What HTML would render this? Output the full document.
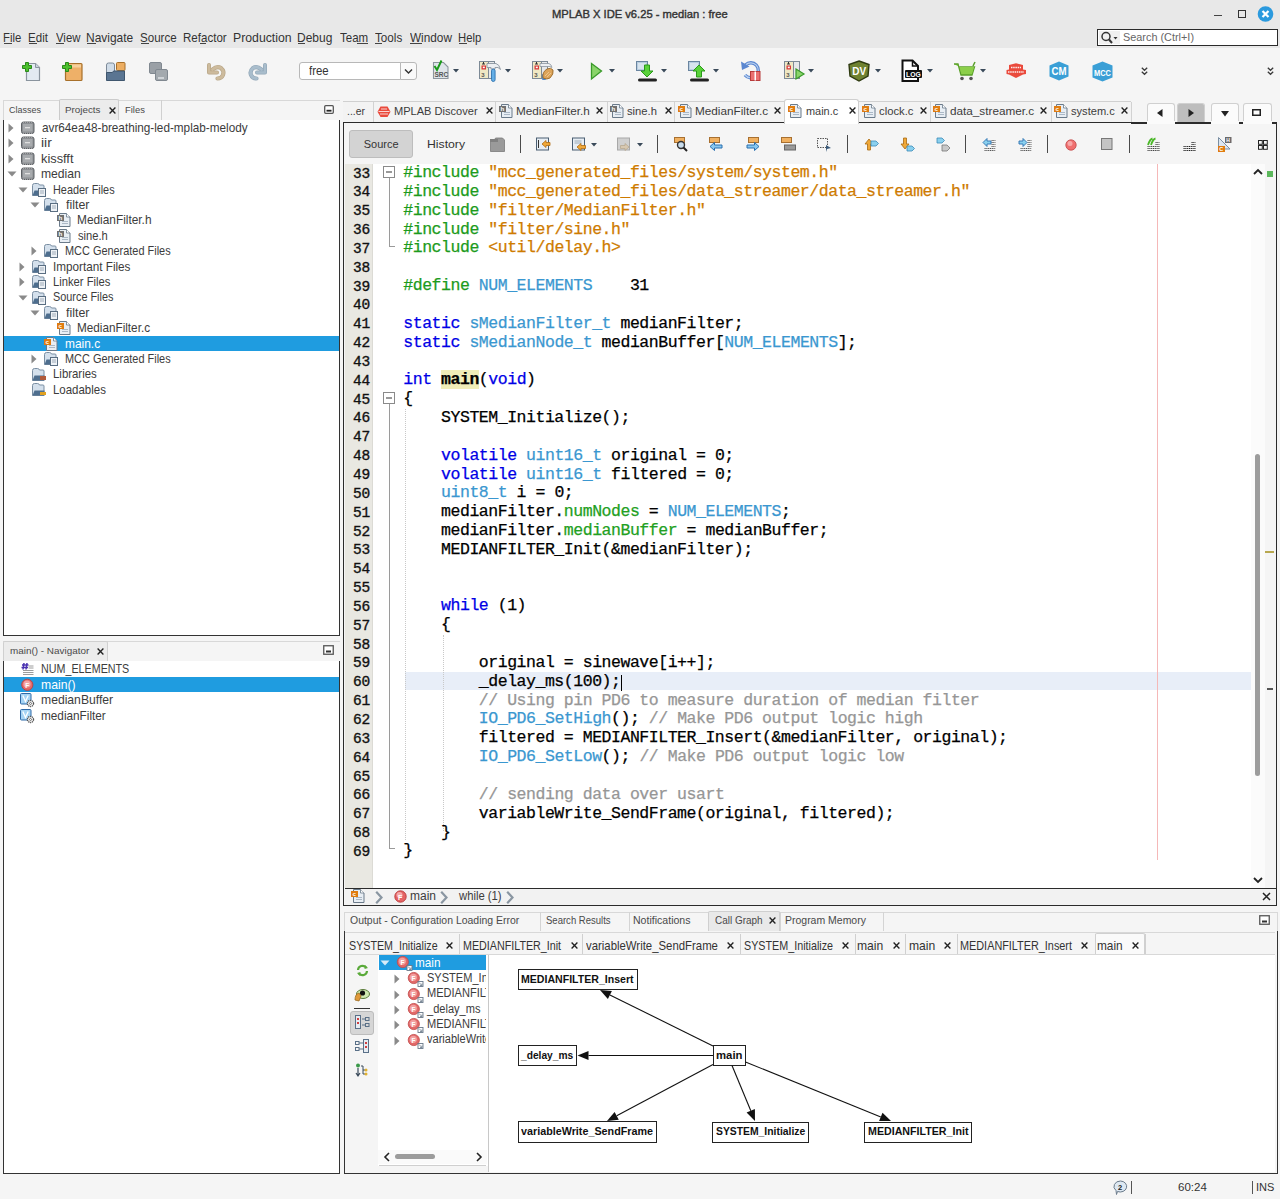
<!DOCTYPE html><html><head><meta charset="utf-8"><style>
*{box-sizing:border-box;margin:0;padding:0}
html,body{width:1280px;height:1199px;overflow:hidden;background:#f5f5f5;font-family:"Liberation Sans",sans-serif;color:#3c3c3c;position:relative}
.a{position:absolute}
.t{position:absolute;white-space:pre;font-size:12px;line-height:14px}
svg{position:absolute;overflow:visible}
.code{position:absolute;left:403.3px;top:164.0px;font-family:"Liberation Mono",monospace;font-size:16.5px;letter-spacing:-0.46px;white-space:pre;color:#000;line-height:18.84px;-webkit-text-stroke:0.25px currentColor}
.lnum{position:absolute;left:345px;top:164.5px;width:25px;-webkit-text-stroke:0.35px #111;text-align:right;font-family:"Liberation Mono",monospace;font-size:14.5px;letter-spacing:-0.2px;color:#111;white-space:pre;line-height:18.84px}
.kw{color:#0000e6}.ty{color:#3a97d0}.pp{color:#1c9b1c}.st{color:#ce7b00}.cm{color:#969696}.fd{color:#22a022}
.tab{position:absolute;font-size:12px;color:#3c3c3c;white-space:pre;line-height:14px}
.x{position:absolute;font-size:11px;color:#222;line-height:12px}
</style></head><body>
<div class="a" style="left:0px;top:0px;width:1280px;height:48px;background:#e8e8e8"></div>
<div class="t" style="left:551.70px;top:8.82px;font-size:11.2px;line-height:11.2px;color:#333;-webkit-text-stroke:0.4px #333;transform:scaleX(0.9989);transform-origin:0 0;">MPLAB X IDE v6.25 - median : free</div>
<div class="a" style="left:1214px;top:14.8px;width:7.5px;height:1.6px;background:#444"></div>
<div class="a" style="left:1238px;top:10px;width:7.6px;height:7.6px;border:1.4px solid #333"></div>
<svg style="left:1257px;top:6px" width="17" height="17"><circle cx="8.5" cy="8" r="7.8" fill="#2b9ade"/><path d="M5.5 5 L11.5 11 M11.5 5 L5.5 11" stroke="#fff" stroke-width="2.2"/></svg>
<div class="t" style="left:3.37px;top:32.36px;font-size:12.1px;line-height:12.1px;color:#333;transform:scaleX(0.9333);transform-origin:0 0;">File</div>
<div class="t" style="left:28.35px;top:32.36px;font-size:12.1px;line-height:12.1px;color:#333;transform:scaleX(0.9550);transform-origin:0 0;">Edit</div>
<div class="t" style="left:55.70px;top:32.36px;font-size:12.1px;line-height:12.1px;color:#333;transform:scaleX(0.9385);transform-origin:0 0;">View</div>
<div class="t" style="left:86.31px;top:32.36px;font-size:12.1px;line-height:12.1px;color:#333;transform:scaleX(0.9894);transform-origin:0 0;">Navigate</div>
<div class="t" style="left:140.04px;top:32.36px;font-size:12.1px;line-height:12.1px;color:#333;transform:scaleX(0.9568);transform-origin:0 0;">Source</div>
<div class="t" style="left:182.64px;top:32.36px;font-size:12.1px;line-height:12.1px;color:#333;transform:scaleX(0.9556);transform-origin:0 0;">Refactor</div>
<div class="t" style="left:232.79px;top:32.36px;font-size:12.1px;line-height:12.1px;color:#333;transform:scaleX(1.0143);transform-origin:0 0;">Production</div>
<div class="t" style="left:296.91px;top:32.36px;font-size:12.1px;line-height:12.1px;color:#333;transform:scaleX(0.9912);transform-origin:0 0;">Debug</div>
<div class="t" style="left:340.20px;top:32.36px;font-size:12.1px;line-height:12.1px;color:#333;transform:scaleX(0.9517);transform-origin:0 0;">Team</div>
<div class="t" style="left:375.00px;top:32.36px;font-size:12.1px;line-height:12.1px;color:#333;transform:scaleX(0.9643);transform-origin:0 0;">Tools</div>
<div class="t" style="left:410.20px;top:32.36px;font-size:12.1px;line-height:12.1px;color:#333;transform:scaleX(0.9744);transform-origin:0 0;">Window</div>
<div class="t" style="left:458.07px;top:32.36px;font-size:12.1px;line-height:12.1px;color:#333;transform:scaleX(0.9333);transform-origin:0 0;">Help</div>
<div class="a" style="left:4.3px;top:43.2px;width:7.8999999999999995px;height:1px;background:#444"></div>
<div class="a" style="left:29.3px;top:43.2px;width:7.699999999999999px;height:1px;background:#444"></div>
<div class="a" style="left:55.7px;top:43.2px;width:8.299999999999997px;height:1px;background:#444"></div>
<div class="a" style="left:87.3px;top:43.2px;width:9.200000000000003px;height:1px;background:#444"></div>
<div class="a" style="left:141px;top:43.2px;width:8px;height:1px;background:#444"></div>
<div class="a" style="left:200.2px;top:43.2px;width:6.0px;height:1px;background:#444"></div>
<div class="a" style="left:297.9px;top:43.2px;width:7.600000000000023px;height:1px;background:#444"></div>
<div class="a" style="left:357.4px;top:43.2px;width:10.400000000000034px;height:1px;background:#444"></div>
<div class="a" style="left:375px;top:43.2px;width:6.800000000000011px;height:1px;background:#444"></div>
<div class="a" style="left:410.2px;top:43.2px;width:11.699999999999989px;height:1px;background:#444"></div>
<div class="a" style="left:459px;top:43.2px;width:7.800000000000011px;height:1px;background:#444"></div>
<div class="a" style="left:1097px;top:29px;width:181px;height:17px;background:#fff;border:1.5px solid #2b2b2b"></div>
<div class="a" style="left:1099px;top:31px;width:21px;height:13px;background:#f0f0f0"></div>
<svg style="left:1100px;top:31px" width="20" height="14"><circle cx="6" cy="5.5" r="4" fill="none" stroke="#333" stroke-width="1.5"/><path d="M9 8.5 L12 12" stroke="#333" stroke-width="2"/><path d="M13.5 6 L17.5 6 L15.5 8.5Z" fill="#333"/></svg>
<div class="t" style="left:1123.40px;top:32.46px;font-size:10.8px;line-height:10.8px;color:#666;transform:scaleX(1.0071);transform-origin:0 0;">Search (Ctrl+I)</div>
<div class="a" style="left:0px;top:48px;width:1280px;height:50px;background:#f5f5f5"></div>
<svg style="left:22px;top:62px" width="20" height="20" viewBox="0 0 20 20"><path d="M4.5 1.5 h9 l4 4 v13 h-13z" fill="#e2e9f1" stroke="#8a949e" stroke-width="1.2"/><path d="M13.5 1.5 v4 h4" fill="#c9d3dd" stroke="#8a949e" stroke-width="1"/><path d="M3.5 0.5 h3 v3 h3 v3 h-3 v3 h-3 v-3 h-3 v-3 h3z" fill="#4cc02c" stroke="#2a8a1a" stroke-width="1"/></svg>
<svg style="left:62px;top:62px" width="22" height="20" viewBox="0 0 22 20"><rect x="3.5" y="1.5" width="16.5" height="17" rx="1" fill="#eeb068" stroke="#a8702a" stroke-width="1.2"/><rect x="4.5" y="2.5" width="14.5" height="3" fill="#f6d09c"/><path d="M3.5 0.5 h3 v3 h3 v3 h-3 v3 h-3 v-3 h-3 v-3 h3z" fill="#4cc02c" stroke="#2a8a1a" stroke-width="1"/></svg>
<svg style="left:105px;top:61px" width="22" height="22" viewBox="0 0 22 22"><path d="M1.5 4 q0-2 2-2 h4 q2 0 2 2 v14 h-8z" fill="#d0dce8" stroke="#7d8a98" stroke-width="1"/><rect x="11.5" y="1.5" width="8.5" height="8" rx="1" fill="#edae62" stroke="#a8702a" stroke-width="1"/><path d="M1.5 19.5 v-8 h6 l1-1.5 h11 v9.5z" fill="#5a7592" stroke="#3f566e" stroke-width="1"/></svg>
<svg style="left:148px;top:61px" width="22" height="22" viewBox="0 0 22 22"><rect x="1.5" y="1.5" width="12" height="11" rx="1.5" fill="#9aa0a6" stroke="#808890" stroke-width="1"/><rect x="7.5" y="8.5" width="12" height="11" rx="1.5" fill="#a3a9ae" stroke="#808890" stroke-width="1"/><rect x="10" y="16" width="6" height="2" fill="#d0d4d8"/></svg>
<svg style="left:207px;top:63px" width="19" height="18" viewBox="0 0 19 18"><path d="M2 2 v7.5 h8" fill="none" stroke="#b8a688" stroke-width="4" stroke-linejoin="round" stroke-linecap="round"/><path d="M5.5 6.5 Q10 2.5 14 5 Q17.5 8 16 12 Q14.5 15.5 10.5 15.5" fill="none" stroke="#b8a688" stroke-width="4.2" stroke-linecap="round"/><path d="M2 2 v7.5 h8" fill="none" stroke="#cdbb9d" stroke-width="2.6" stroke-linejoin="round" stroke-linecap="round"/><path d="M5.5 6.5 Q10 2.5 14 5 Q17.5 8 16 12 Q14.5 15.5 10.5 15.5" fill="none" stroke="#cdbb9d" stroke-width="2.8" stroke-linecap="round"/></svg>
<svg style="left:248px;top:63px" width="19" height="18" viewBox="0 0 19 18"><g transform="translate(19,0) scale(-1,1)"><path d="M2 2 v7.5 h8" fill="none" stroke="#93a8b8" stroke-width="4" stroke-linejoin="round" stroke-linecap="round"/><path d="M5.5 6.5 Q10 2.5 14 5 Q17.5 8 16 12 Q14.5 15.5 10.5 15.5" fill="none" stroke="#93a8b8" stroke-width="4.2" stroke-linecap="round"/><path d="M2 2 v7.5 h8" fill="none" stroke="#a9bdcc" stroke-width="2.6" stroke-linejoin="round" stroke-linecap="round"/><path d="M5.5 6.5 Q10 2.5 14 5 Q17.5 8 16 12 Q14.5 15.5 10.5 15.5" fill="none" stroke="#a9bdcc" stroke-width="2.8" stroke-linecap="round"/></g></svg>
<div class="a" style="left:299px;top:62px;width:102px;height:18px;background:#fff;border:1px solid #b8b8b8;border-radius:3px 0 0 3px"></div>
<div class="a" style="left:400px;top:62px;width:17px;height:18px;border:1px solid #b8b8b8;background:#fafafa;border-radius:0 3px 3px 0"></div>
<svg style="left:404px;top:69px" width="9" height="5" viewBox="0 0 9 5"><path d="M1 0.5 L4.5 4 L8 0.5" fill="none" stroke="#333" stroke-width="1.4"/></svg>
<div class="t" style="left:308.80px;top:65.04px;font-size:12px;line-height:12px;color:#333;transform:scaleX(0.9476);transform-origin:0 0;">free</div>
<svg style="left:432px;top:60px" width="18" height="20" viewBox="0 0 18 20"><path d="M1.5 2.5 h10 l4.5 4.5 v11.5 h-14.5z" fill="#dfe5ea" stroke="#8d969e" stroke-width="1.1"/><text x="2.5" y="16.5" font-family="Liberation Sans" font-weight="bold" font-size="6.5" fill="#555">SRC</text><path d="M2.5 6 L5 10 L9.5 0.5" fill="none" stroke="#1a9a1a" stroke-width="2"/></svg>
<svg style="left:453px;top:69px" width="6" height="4" viewBox="0 0 6 4"><path d="M0 0 L6 0 L3 3.5Z" fill="#3a4a5a"/></svg>
<svg style="left:479px;top:61px" width="22" height="22" viewBox="0 0 22 22"><rect x="0.5" y="0.5" width="9" height="17" fill="#efe8c4" stroke="#7d8a96" stroke-width="1"/><path d="M4.5 1 v2 M3 3 h3" stroke="#333" stroke-width="1"/><rect x="2.5" y="4.5" width="4.5" height="4" fill="#d83a3a"/><rect x="3.8" y="5.6" width="2" height="1.6" fill="#fff"/><text x="2.3" y="15.5" font-family="Liberation Sans" font-weight="bold" font-size="6" fill="#555">3</text><rect x="9.5" y="0.5" width="6" height="17" fill="#e6e8ea" stroke="#7d8a96" stroke-width="1"/><path d="M8 2.5 h9 q3.5 1 4.5 6 l-2.5-2 h-3 v1.5 h-4 v-1.5 h-4z" fill="#eceff2" stroke="#8a949e" stroke-width="0.9"/><rect x="12.5" y="8" width="3.6" height="12.5" rx="1.8" fill="#64aee6" stroke="#2f74b0" stroke-width="0.9"/></svg>
<svg style="left:505px;top:69px" width="6" height="4" viewBox="0 0 6 4"><path d="M0 0 L6 0 L3 3.5Z" fill="#3a4a5a"/></svg>
<svg style="left:532px;top:61px" width="22" height="22" viewBox="0 0 22 22"><rect x="0.5" y="0.5" width="9" height="17" fill="#efe8c4" stroke="#7d8a96" stroke-width="1"/><path d="M4.5 1 v2 M3 3 h3" stroke="#333" stroke-width="1"/><rect x="2.5" y="4.5" width="4.5" height="4" fill="#d83a3a"/><rect x="3.8" y="5.6" width="2" height="1.6" fill="#fff"/><text x="2.3" y="15.5" font-family="Liberation Sans" font-weight="bold" font-size="6" fill="#555">3</text><rect x="9.5" y="0.5" width="6" height="17" fill="#e6e8ea" stroke="#7d8a96" stroke-width="1"/><path d="M8 2.5 h9 q2.5 1 3 4 l-2-1 h-10z" fill="#eceff2" stroke="#8a949e" stroke-width="0.8"/><rect x="10" y="13" width="4" height="6" rx="1" fill="#4a8ad0"/><path d="M11 17 q-1-6 4-9 q4-2 6 1 q1 4-3 8 q-3 2-7 0z" fill="#dca45a" stroke="#9a6a2a" stroke-width="0.9"/><path d="M13 15 l4-4 M15 16 l4-4" stroke="#f2d09a" stroke-width="0.8"/></svg>
<svg style="left:557px;top:69px" width="6" height="4" viewBox="0 0 6 4"><path d="M0 0 L6 0 L3 3.5Z" fill="#3a4a5a"/></svg>
<svg style="left:590px;top:62px" width="13" height="19" viewBox="0 0 13 19"><path d="M1.5 1.5 L11.5 9 L1.5 17z" fill="#8ad46a" stroke="#3a9a2a" stroke-width="1.3"/></svg>
<svg style="left:609px;top:69px" width="6" height="4" viewBox="0 0 6 4"><path d="M0 0 L6 0 L3 3.5Z" fill="#3a4a5a"/></svg>
<svg style="left:636px;top:61px" width="22" height="21" viewBox="0 0 22 21"><rect x="0.5" y="0.5" width="11" height="9" fill="#b8cde0" stroke="#6a85a0" stroke-width="1"/><rect x="2" y="2" width="8" height="6" fill="#d8e4ee"/><path d="M8.5 4 h5 v6 h3.5 l-6 6 l-6-6 h3.5z" fill="#5ad23a" stroke="#2a9a1a" stroke-width="1"/><rect x="2" y="17.5" width="19" height="3" rx="1.5" fill="#222"/></svg>
<svg style="left:661px;top:69px" width="6" height="4" viewBox="0 0 6 4"><path d="M0 0 L6 0 L3 3.5Z" fill="#3a4a5a"/></svg>
<svg style="left:688px;top:61px" width="22" height="21" viewBox="0 0 22 21"><rect x="0.5" y="0.5" width="11" height="9" fill="#b8cde0" stroke="#6a85a0" stroke-width="1"/><rect x="2" y="2" width="8" height="6" fill="#d8e4ee"/><path d="M11 4 l6 6 h-3.5 v6 h-5 v-6 h-3.5z" fill="#5ad23a" stroke="#2a9a1a" stroke-width="1"/><rect x="2" y="17.5" width="19" height="3" rx="1.5" fill="#222"/></svg>
<svg style="left:713px;top:69px" width="6" height="4" viewBox="0 0 6 4"><path d="M0 0 L6 0 L3 3.5Z" fill="#3a4a5a"/></svg>
<svg style="left:740px;top:60px" width="22" height="22" viewBox="0 0 22 22"><path d="M5.5 5 A7.5 7.5 0 1 1 5 15" fill="none" stroke="#5a86d0" stroke-width="3.4"/><path d="M5.5 5 A7.5 7.5 0 1 1 5 15" fill="none" stroke="#b8d0f0" stroke-width="1.2"/><path d="M1 1.5 L2 10 L9.5 6.5z" fill="#5a86d0"/><rect x="10.5" y="11.5" width="9.5" height="9" fill="#ea7070" stroke="#b83a3a" stroke-width="1"/><rect x="14.5" y="11.5" width="1.5" height="9" fill="#fff"/></svg>
<svg style="left:784px;top:61px" width="22" height="21" viewBox="0 0 22 21"><rect x="0.5" y="0.5" width="9" height="17" fill="#efe8c4" stroke="#7d8a96" stroke-width="1"/><path d="M4.5 1 v2 M3 3 h3" stroke="#333" stroke-width="1"/><rect x="2.5" y="4.5" width="4.5" height="4" fill="#d83a3a"/><rect x="3.8" y="5.6" width="2" height="1.6" fill="#fff"/><text x="2.3" y="15.5" font-family="Liberation Sans" font-weight="bold" font-size="6" fill="#555">3</text><rect x="9.5" y="0.5" width="6" height="17" fill="#e6e8ea" stroke="#7d8a96" stroke-width="1"/><path d="M12 8 L20 13 L12 18z" fill="#8ad46a" stroke="#3a9a2a" stroke-width="1.2"/></svg>
<svg style="left:808px;top:69px" width="6" height="4" viewBox="0 0 6 4"><path d="M0 0 L6 0 L3 3.5Z" fill="#3a4a5a"/></svg>
<svg style="left:848px;top:60px" width="23" height="22" viewBox="0 0 23 22"><path d="M11 1 L21 4.5 L20 16 L11 21 L2 16 L1 4.5z" fill="#6f8230" stroke="#2e3a10" stroke-width="1.4"/><text x="4.2" y="15" font-family="Liberation Sans" font-weight="bold" font-size="10" fill="#fff">DV</text></svg>
<svg style="left:875px;top:69px" width="6" height="4" viewBox="0 0 6 4"><path d="M0 0 L6 0 L3 3.5Z" fill="#3a4a5a"/></svg>
<svg style="left:900px;top:59px" width="24" height="24" viewBox="0 0 24 24"><path d="M2.5 1.5 h10 l5.5 5.5 v15 h-15.5z" fill="#fff" stroke="#111" stroke-width="2"/><path d="M12.5 1.5 v5.5 h5.5" fill="none" stroke="#111" stroke-width="1.5"/><rect x="5" y="11" width="17" height="8" rx="1" fill="#111"/><text x="6" y="17.8" font-family="Liberation Sans" font-weight="bold" font-size="6.8" fill="#fff">LOG</text></svg>
<svg style="left:927px;top:69px" width="6" height="4" viewBox="0 0 6 4"><path d="M0 0 L6 0 L3 3.5Z" fill="#3a4a5a"/></svg>
<svg style="left:953px;top:61px" width="24" height="22" viewBox="0 0 24 22"><path d="M1 3 h4 l3 11 h11 l2.5-8 h-15" fill="#8ccf4a" stroke="#5aa02a" stroke-width="1.3"/><path d="M6.5 6 h14.5 l-2 7 h-10.5z" fill="#8ccf4a"/><path d="M22 1 L20 5" stroke="#5aa02a" stroke-width="1.5"/><circle cx="9" cy="17.5" r="1.8" fill="#555"/><circle cx="18" cy="17.5" r="1.8" fill="#555"/></svg>
<svg style="left:980px;top:69px" width="6" height="4" viewBox="0 0 6 4"><path d="M0 0 L6 0 L3 3.5Z" fill="#3a4a5a"/></svg>
<svg style="left:1006px;top:63px" width="21" height="16" viewBox="0 0 21 16"><path d="M3 2 L10 0.3 L17 2 L17 6.5 L20 7 L20 11 L17 11.5 L10 15 L3 11.5 L0.5 11 L0.5 7 L3 6.5z" fill="#ea4a3c"/><path d="M5 4.5 h10 M2 9 h16" stroke="#fff" stroke-width="1.3" stroke-dasharray="1.5 0.7" opacity="0.9"/></svg>
<svg style="left:1049px;top:61px" width="20" height="20" viewBox="0 0 20 20"><path d="M10 0.5 L19.5 4.5 L19.5 15.5 L10 19.5 L0.5 15.5 L0.5 4.5z" fill="#3a9fd6"/><text x="10" y="14.3" text-anchor="middle" font-family="Liberation Sans" font-weight="bold" font-size="10.5" fill="#fff" textLength="15" lengthAdjust="spacingAndGlyphs">CM</text></svg>
<svg style="left:1091.5px;top:60.5px" width="21" height="21" viewBox="0 0 21 21"><path d="M10.5 0.5 L20.5 4.5 L20.5 16.5 L10.5 20.5 L0.5 16.5 L0.5 4.5z" fill="#3a9fd6"/><text x="10.5" y="14.8" text-anchor="middle" font-family="Liberation Sans" font-weight="bold" font-size="9.5" fill="#fff" textLength="17" lengthAdjust="spacingAndGlyphs">MCC</text></svg>
<svg style="left:1141px;top:67px" width="7" height="9" viewBox="0 0 7 9"><path d="M0.8 0.8 L3.5 3.3 L6.2 0.8 M0.8 4.8 L3.5 7.3 L6.2 4.8" fill="none" stroke="#3a3a3a" stroke-width="1.3"/></svg>
<svg style="left:1267px;top:67px" width="7" height="9" viewBox="0 0 7 9"><path d="M0.8 0.8 L3.5 3.3 L6.2 0.8 M0.8 4.8 L3.5 7.3 L6.2 4.8" fill="none" stroke="#3a3a3a" stroke-width="1.3"/></svg>
<div class="a" style="left:3px;top:100px;width:337px;height:20px;background:#f5f5f5;border-top:1px solid #d8d8d8"></div>
<div class="a" style="left:3px;top:100px;width:1px;height:20px;background:#d8d8d8"></div>
<div class="a" style="left:58.5px;top:99px;width:60.5px;height:21px;background:#ececec;border:1.5px solid #cbcbcb;border-bottom:none;border-radius:2px 2px 0 0"></div>
<div class="a" style="left:118px;top:100px;width:1px;height:20px;background:#d0d0d0"></div>
<div class="t" style="left:9.40px;top:104.82px;font-size:9.9px;line-height:9.9px;color:#4a4a4a;transform:scaleX(0.9100);transform-origin:0 0;">Classes</div>
<div class="t" style="left:65.25px;top:104.82px;font-size:9.9px;line-height:9.9px;color:#4a4a4a;transform:scaleX(0.9931);transform-origin:0 0;">Projects</div>
<svg style="left:108.5px;top:107px" width="7" height="7" viewBox="0 0 7 7"><path d="M0.6 0.6 L6.4 6.4 M6.4 0.6 L0.6 6.4" stroke="#222" stroke-width="1.35"/></svg>
<div class="t" style="left:125.00px;top:104.82px;font-size:9.9px;line-height:9.9px;color:#4a4a4a;transform:scaleX(0.9524);transform-origin:0 0;">Files</div>
<div class="a" style="left:160.5px;top:100px;width:1.2px;height:20px;background:#d0d0d0"></div>
<svg style="left:324px;top:105px" width="10" height="9" viewBox="0 0 10 9"><rect x="0.7" y="0.7" width="8.6" height="7.6" rx="1" fill="#fff" stroke="#555" stroke-width="1.3"/><rect x="2.5" y="4.8" width="5" height="1.8" fill="#222"/></svg>
<div class="a" style="left:3px;top:120px;width:337px;height:516px;background:#fff;border:1.5px solid #333;border-top:none"></div>
<svg style="left:8px;top:123.0px" width="6" height="10" viewBox="0 0 6 10"><path d="M0.5 0.5 L5.5 5 L0.5 9.5z" fill="#8a8a8a"/></svg>
<svg style="left:21px;top:121.0px" width="14" height="14" viewBox="0 0 14 14"><rect x="0.5" y="1" width="12.5" height="11.5" rx="2" fill="#8c8f93" stroke="#5e6266" stroke-width="1"/><rect x="2" y="3" width="9.5" height="7.5" fill="#a8abae"/><rect x="4" y="6" width="5" height="1.3" fill="#e0e0e0"/><path d="M2 1.2 h9.5 M2 12.3 h9.5" stroke="#c8c8c8" stroke-width="0.8" stroke-dasharray="1 1"/></svg>
<div class="t" style="left:41.60px;top:120.90px;font-size:13px;line-height:13px;color:#3c3c3c;transform:scaleX(0.9031);transform-origin:0 0;">avr64ea48-breathing-led-mplab-melody</div>
<svg style="left:8px;top:138.41px" width="6" height="10" viewBox="0 0 6 10"><path d="M0.5 0.5 L5.5 5 L0.5 9.5z" fill="#8a8a8a"/></svg>
<svg style="left:21px;top:136.41px" width="14" height="14" viewBox="0 0 14 14"><rect x="0.5" y="1" width="12.5" height="11.5" rx="2" fill="#8c8f93" stroke="#5e6266" stroke-width="1"/><rect x="2" y="3" width="9.5" height="7.5" fill="#a8abae"/><rect x="4" y="6" width="5" height="1.3" fill="#e0e0e0"/><path d="M2 1.2 h9.5 M2 12.3 h9.5" stroke="#c8c8c8" stroke-width="0.8" stroke-dasharray="1 1"/></svg>
<div class="t" style="left:40.53px;top:136.31px;font-size:13px;line-height:13px;color:#3c3c3c;transform:scaleX(1.0667);transform-origin:0 0;">iir</div>
<svg style="left:8px;top:153.82px" width="6" height="10" viewBox="0 0 6 10"><path d="M0.5 0.5 L5.5 5 L0.5 9.5z" fill="#8a8a8a"/></svg>
<svg style="left:21px;top:151.82px" width="14" height="14" viewBox="0 0 14 14"><rect x="0.5" y="1" width="12.5" height="11.5" rx="2" fill="#8c8f93" stroke="#5e6266" stroke-width="1"/><rect x="2" y="3" width="9.5" height="7.5" fill="#a8abae"/><rect x="4" y="6" width="5" height="1.3" fill="#e0e0e0"/><path d="M2 1.2 h9.5 M2 12.3 h9.5" stroke="#c8c8c8" stroke-width="0.8" stroke-dasharray="1 1"/></svg>
<div class="t" style="left:40.62px;top:151.72px;font-size:13px;line-height:13px;color:#3c3c3c;transform:scaleX(0.9844);transform-origin:0 0;">kissfft</div>
<svg style="left:7px;top:171.23px" width="10" height="6" viewBox="0 0 10 6"><path d="M0.5 0.5 L9.5 0.5 L5 5.5z" fill="#8a8a8a"/></svg>
<svg style="left:21px;top:167.23px" width="14" height="14" viewBox="0 0 14 14"><rect x="0.5" y="1" width="12.5" height="11.5" rx="2" fill="#8c8f93" stroke="#5e6266" stroke-width="1"/><rect x="2" y="3" width="9.5" height="7.5" fill="#a8abae"/><rect x="4" y="6" width="5" height="1.3" fill="#e0e0e0"/><path d="M2 1.2 h9.5 M2 12.3 h9.5" stroke="#c8c8c8" stroke-width="0.8" stroke-dasharray="1 1"/></svg>
<div class="t" style="left:40.67px;top:167.13px;font-size:13px;line-height:13px;color:#3c3c3c;transform:scaleX(0.9341);transform-origin:0 0;">median</div>
<svg style="left:18px;top:186.64px" width="10" height="6" viewBox="0 0 10 6"><path d="M0.5 0.5 L9.5 0.5 L5 5.5z" fill="#8a8a8a"/></svg>
<svg style="left:32px;top:182.64px" width="15" height="15" viewBox="0 0 15 15"><path d="M0.5 2.5 q0-2 2-2 h3 q1.5 0 2 1.5 h3.5 q1 0 1 1 v9.5 h-11.5z" fill="#d4e0ec" stroke="#7a8ea2" stroke-width="1"/><path d="M0.5 12.5 l2-5 h5 v5z" fill="#4e6e8e"/><rect x="6.5" y="5.5" width="7" height="8" fill="#eef2f6" stroke="#5a6e82" stroke-width="1"/><path d="M8 8 h4 M8 10 h4" stroke="#8a9aaa" stroke-width="0.8"/></svg>
<div class="t" style="left:53.06px;top:182.54px;font-size:13px;line-height:13px;color:#3c3c3c;transform:scaleX(0.8356);transform-origin:0 0;">Header Files</div>
<svg style="left:30px;top:202.05px" width="10" height="6" viewBox="0 0 10 6"><path d="M0.5 0.5 L9.5 0.5 L5 5.5z" fill="#8a8a8a"/></svg>
<svg style="left:44px;top:198.05px" width="15" height="15" viewBox="0 0 15 15"><path d="M0.5 2.5 q0-2 2-2 h3 q1.5 0 2 1.5 h3.5 q1 0 1 1 v9.5 h-11.5z" fill="#d4e0ec" stroke="#7a8ea2" stroke-width="1"/><path d="M0.5 12.5 l2-5 h5 v5z" fill="#4e6e8e"/><rect x="6.5" y="5.5" width="7" height="8" fill="#eef2f6" stroke="#5a6e82" stroke-width="1"/><path d="M8 8 h4 M8 10 h4" stroke="#8a9aaa" stroke-width="0.8"/></svg>
<div class="t" style="left:65.70px;top:197.95px;font-size:13px;line-height:13px;color:#3c3c3c;transform:scaleX(0.9520);transform-origin:0 0;">filter</div>
<svg style="left:57px;top:213.46px" width="14" height="14" viewBox="0 0 14 14"><path d="M2.5 0.5 h7 l3.5 3.5 v9.5 h-10.5z" fill="#e8eef4" stroke="#6a7a8a" stroke-width="1"/><path d="M9.5 0.5 v3.5 h3.5" fill="#fff" stroke="#6a7a8a" stroke-width="0.8"/><path d="M5 8.5 h6 M5 10.5 h6" stroke="#9aaaba" stroke-width="0.8"/><rect x="0" y="2" width="7" height="6" fill="#707070"/><text x="1.6" y="7.3" font-family="Liberation Sans" font-weight="bold" font-size="6.2" fill="#fff">h</text></svg>
<div class="t" style="left:77.09px;top:213.36px;font-size:13px;line-height:13px;color:#3c3c3c;transform:scaleX(0.9125);transform-origin:0 0;">MedianFilter.h</div>
<svg style="left:57px;top:228.87px" width="14" height="14" viewBox="0 0 14 14"><path d="M2.5 0.5 h7 l3.5 3.5 v9.5 h-10.5z" fill="#e8eef4" stroke="#6a7a8a" stroke-width="1"/><path d="M9.5 0.5 v3.5 h3.5" fill="#fff" stroke="#6a7a8a" stroke-width="0.8"/><path d="M5 8.5 h6 M5 10.5 h6" stroke="#9aaaba" stroke-width="0.8"/><rect x="0" y="2" width="7" height="6" fill="#707070"/><text x="1.6" y="7.3" font-family="Liberation Sans" font-weight="bold" font-size="6.2" fill="#fff">h</text></svg>
<div class="t" style="left:78.00px;top:228.77px;font-size:13px;line-height:13px;color:#3c3c3c;transform:scaleX(0.8588);transform-origin:0 0;">sine.h</div>
<svg style="left:31px;top:246.28px" width="6" height="10" viewBox="0 0 6 10"><path d="M0.5 0.5 L5.5 5 L0.5 9.5z" fill="#8a8a8a"/></svg>
<svg style="left:44px;top:244.28px" width="15" height="15" viewBox="0 0 15 15"><path d="M0.5 2.5 q0-2 2-2 h3 q1.5 0 2 1.5 h3.5 q1 0 1 1 v9.5 h-11.5z" fill="#d4e0ec" stroke="#7a8ea2" stroke-width="1"/><path d="M0.5 12.5 l2-5 h5 v5z" fill="#4e6e8e"/><rect x="6.5" y="5.5" width="7" height="8" fill="#eef2f6" stroke="#5a6e82" stroke-width="1"/><path d="M8 8 h4 M8 10 h4" stroke="#8a9aaa" stroke-width="0.8"/></svg>
<div class="t" style="left:64.86px;top:244.18px;font-size:13px;line-height:13px;color:#3c3c3c;transform:scaleX(0.8400);transform-origin:0 0;">MCC Generated Files</div>
<svg style="left:19px;top:261.69px" width="6" height="10" viewBox="0 0 6 10"><path d="M0.5 0.5 L5.5 5 L0.5 9.5z" fill="#8a8a8a"/></svg>
<svg style="left:32px;top:259.69px" width="15" height="15" viewBox="0 0 15 15"><path d="M0.5 2.5 q0-2 2-2 h3 q1.5 0 2 1.5 h3.5 q1 0 1 1 v9.5 h-11.5z" fill="#d4e0ec" stroke="#7a8ea2" stroke-width="1"/><path d="M0.5 12.5 l2-5 h5 v5z" fill="#4e6e8e"/><rect x="6.5" y="5.5" width="7" height="8" fill="#eef2f6" stroke="#5a6e82" stroke-width="1"/><path d="M8 8 h4 M8 10 h4" stroke="#8a9aaa" stroke-width="0.8"/></svg>
<div class="t" style="left:53.00px;top:259.59px;font-size:13px;line-height:13px;color:#3c3c3c;transform:scaleX(0.9012);transform-origin:0 0;">Important Files</div>
<svg style="left:19px;top:277.1px" width="6" height="10" viewBox="0 0 6 10"><path d="M0.5 0.5 L5.5 5 L0.5 9.5z" fill="#8a8a8a"/></svg>
<svg style="left:32px;top:275.1px" width="15" height="15" viewBox="0 0 15 15"><path d="M0.5 2.5 q0-2 2-2 h3 q1.5 0 2 1.5 h3.5 q1 0 1 1 v9.5 h-11.5z" fill="#d4e0ec" stroke="#7a8ea2" stroke-width="1"/><path d="M0.5 12.5 l2-5 h5 v5z" fill="#4e6e8e"/><rect x="6.5" y="5.5" width="7" height="8" fill="#eef2f6" stroke="#5a6e82" stroke-width="1"/><path d="M8 8 h4 M8 10 h4" stroke="#8a9aaa" stroke-width="0.8"/></svg>
<div class="t" style="left:53.04px;top:275.00px;font-size:13px;line-height:13px;color:#3c3c3c;transform:scaleX(0.8631);transform-origin:0 0;">Linker Files</div>
<svg style="left:18px;top:294.51px" width="10" height="6" viewBox="0 0 10 6"><path d="M0.5 0.5 L9.5 0.5 L5 5.5z" fill="#8a8a8a"/></svg>
<svg style="left:32px;top:290.51px" width="15" height="15" viewBox="0 0 15 15"><path d="M0.5 2.5 q0-2 2-2 h3 q1.5 0 2 1.5 h3.5 q1 0 1 1 v9.5 h-11.5z" fill="#d4e0ec" stroke="#7a8ea2" stroke-width="1"/><path d="M0.5 12.5 l2-5 h5 v5z" fill="#4e6e8e"/><rect x="6.5" y="5.5" width="7" height="8" fill="#eef2f6" stroke="#5a6e82" stroke-width="1"/><path d="M8 8 h4 M8 10 h4" stroke="#8a9aaa" stroke-width="0.8"/></svg>
<div class="t" style="left:53.06px;top:290.41px;font-size:13px;line-height:13px;color:#3c3c3c;transform:scaleX(0.8366);transform-origin:0 0;">Source Files</div>
<svg style="left:30px;top:309.92px" width="10" height="6" viewBox="0 0 10 6"><path d="M0.5 0.5 L9.5 0.5 L5 5.5z" fill="#8a8a8a"/></svg>
<svg style="left:44px;top:305.92px" width="15" height="15" viewBox="0 0 15 15"><path d="M0.5 2.5 q0-2 2-2 h3 q1.5 0 2 1.5 h3.5 q1 0 1 1 v9.5 h-11.5z" fill="#d4e0ec" stroke="#7a8ea2" stroke-width="1"/><path d="M0.5 12.5 l2-5 h5 v5z" fill="#4e6e8e"/><rect x="6.5" y="5.5" width="7" height="8" fill="#eef2f6" stroke="#5a6e82" stroke-width="1"/><path d="M8 8 h4 M8 10 h4" stroke="#8a9aaa" stroke-width="0.8"/></svg>
<div class="t" style="left:65.70px;top:305.82px;font-size:13px;line-height:13px;color:#3c3c3c;transform:scaleX(0.9520);transform-origin:0 0;">filter</div>
<svg style="left:57px;top:321.33px" width="14" height="14" viewBox="0 0 14 14"><path d="M2.5 0.5 h7 l3.5 3.5 v9.5 h-10.5z" fill="#e8eef4" stroke="#6a7a8a" stroke-width="1"/><path d="M9.5 0.5 v3.5 h3.5" fill="#fff" stroke="#6a7a8a" stroke-width="0.8"/><path d="M5 8.5 h6 M5 10.5 h6" stroke="#9aaaba" stroke-width="0.8"/><rect x="0" y="2" width="7" height="6" fill="#e07c10"/><text x="1.6" y="7.3" font-family="Liberation Sans" font-weight="bold" font-size="6.2" fill="#fff">c</text></svg>
<div class="t" style="left:77.10px;top:321.23px;font-size:13px;line-height:13px;color:#3c3c3c;transform:scaleX(0.9025);transform-origin:0 0;">MedianFilter.c</div>
<div class="a" style="left:4px;top:336.24px;width:335px;height:15px;background:#1f9ce0"></div>
<svg style="left:44px;top:336.74px" width="14" height="14" viewBox="0 0 14 14"><path d="M2.5 0.5 h7 l3.5 3.5 v9.5 h-10.5z" fill="#e8eef4" stroke="#6a7a8a" stroke-width="1"/><path d="M9.5 0.5 v3.5 h3.5" fill="#fff" stroke="#6a7a8a" stroke-width="0.8"/><path d="M5 8.5 h6 M5 10.5 h6" stroke="#9aaaba" stroke-width="0.8"/><rect x="0" y="2" width="7" height="6" fill="#e07c10"/><text x="1.6" y="7.3" font-family="Liberation Sans" font-weight="bold" font-size="6.2" fill="#fff">c</text></svg>
<div class="t" style="left:64.78px;top:336.64px;font-size:13px;line-height:13px;color:#fff;transform:scaleX(0.9162);transform-origin:0 0;">main.c</div>
<svg style="left:31px;top:354.15px" width="6" height="10" viewBox="0 0 6 10"><path d="M0.5 0.5 L5.5 5 L0.5 9.5z" fill="#8a8a8a"/></svg>
<svg style="left:44px;top:352.15px" width="15" height="15" viewBox="0 0 15 15"><path d="M0.5 2.5 q0-2 2-2 h3 q1.5 0 2 1.5 h3.5 q1 0 1 1 v9.5 h-11.5z" fill="#d4e0ec" stroke="#7a8ea2" stroke-width="1"/><path d="M0.5 12.5 l2-5 h5 v5z" fill="#4e6e8e"/><rect x="6.5" y="5.5" width="7" height="8" fill="#eef2f6" stroke="#5a6e82" stroke-width="1"/><path d="M8 8 h4 M8 10 h4" stroke="#8a9aaa" stroke-width="0.8"/></svg>
<div class="t" style="left:64.86px;top:352.05px;font-size:13px;line-height:13px;color:#3c3c3c;transform:scaleX(0.8400);transform-origin:0 0;">MCC Generated Files</div>
<svg style="left:32px;top:367.56px" width="15" height="15" viewBox="0 0 15 15"><path d="M0.5 2.5 q0-2 2-2 h3 q1.5 0 2 1.5 h3.5 q1 0 1 1 v9.5 h-11.5z" fill="#d4e0ec" stroke="#7a8ea2" stroke-width="1"/><path d="M0.5 12.5 l2-5 h10 v5z" fill="#4e6e8e"/><rect x="8" y="8" width="6" height="4" fill="#b05a3a"/></svg>
<div class="t" style="left:53.02px;top:367.46px;font-size:13px;line-height:13px;color:#3c3c3c;transform:scaleX(0.8776);transform-origin:0 0;">Libraries</div>
<svg style="left:32px;top:382.97px" width="15" height="15" viewBox="0 0 15 15"><path d="M0.5 2.5 q0-2 2-2 h3 q1.5 0 2 1.5 h3.5 q1 0 1 1 v9.5 h-11.5z" fill="#d4e0ec" stroke="#7a8ea2" stroke-width="1"/><path d="M0.5 12.5 l2-5 h10 v5z" fill="#4e6e8e"/><rect x="8" y="9" width="6" height="3" fill="#e0a020"/></svg>
<div class="t" style="left:53.02px;top:382.87px;font-size:13px;line-height:13px;color:#3c3c3c;transform:scaleX(0.8814);transform-origin:0 0;">Loadables</div>
<div class="a" style="left:3px;top:641px;width:337px;height:20px;background:#f5f5f5;border-top:1px solid #d8d8d8"></div>
<div class="a" style="left:3px;top:641px;width:105px;height:20px;background:#ececec;border:1px solid #d0d0d0;border-bottom:none;border-radius:2px 2px 0 0"></div>
<div class="t" style="left:9.60px;top:646.40px;font-size:9.8px;line-height:9.8px;color:#4a4a4a;transform:scaleX(1.0101);transform-origin:0 0;">main() - Navigator</div>
<svg style="left:97px;top:648px" width="7" height="7" viewBox="0 0 7 7"><path d="M0.6 0.6 L6.4 6.4 M6.4 0.6 L0.6 6.4" stroke="#222" stroke-width="1.35"/></svg>
<svg style="left:323px;top:645px" width="11" height="10" viewBox="0 0 11 10"><rect x="0.75" y="0.75" width="9.5" height="8.5" fill="#fff" stroke="#555" stroke-width="1.3"/><rect x="3" y="5.5" width="5" height="2" fill="#333"/></svg>
<div class="a" style="left:3px;top:661px;width:337px;height:513px;background:#fff;border:1.5px solid #333;border-top:none"></div>
<svg style="left:21.3px;top:662px" width="15" height="15" viewBox="0 0 15 15"><path d="M3 1 l-1 6.5 M6 1 l-1 6.5 M1 3 h6.5 M0.5 5.5 h6.5" stroke="#4a32b0" stroke-width="1.5"/><path d="M7.5 4 h5 M7.5 6 h5 M2 8.5 h10.5 M2 10.5 h10.5 M2 12.5 h10.5" stroke="#9c9c9c" stroke-width="1"/></svg>
<div class="t" style="left:40.77px;top:662.30px;font-size:13px;line-height:13px;color:#3c3c3c;transform:scaleX(0.8255);transform-origin:0 0;">NUM_ELEMENTS</div>
<div class="a" style="left:4px;top:677.0px;width:335px;height:15px;background:#1f9ce0"></div>
<svg style="left:21.3px;top:677.5px" width="15" height="15" viewBox="0 0 15 15"><circle cx="6.3" cy="6.8" r="5.6" fill="#e46a6a" stroke="#b84040" stroke-width="0.9"/><circle cx="6" cy="6" r="3.6" fill="#f4a4a4"/><text x="4.2" y="9.5" font-family="Liberation Sans" font-weight="bold" font-size="6.5" fill="#fff">F</text></svg>
<div class="t" style="left:40.66px;top:677.80px;font-size:13px;line-height:13px;color:#fff;transform:scaleX(0.9371);transform-origin:0 0;">main()</div>
<svg style="left:20.2px;top:693px" width="15" height="15" viewBox="0 0 15 15"><rect x="0.5" y="0.5" width="10.5" height="10.5" rx="1" fill="#a6d4f4" stroke="#2f6aa8" stroke-width="1"/><path d="M2.8 2.5 l2.7 6 l2.7-6" fill="none" stroke="#fff" stroke-width="1.3"/><circle cx="10.5" cy="10.5" r="3" fill="#fff" stroke="#555" stroke-width="1.4" stroke-dasharray="1.2 0.7"/><circle cx="10.5" cy="10.5" r="1" fill="#fff" stroke="#555" stroke-width="0.8"/></svg>
<div class="t" style="left:40.66px;top:693.30px;font-size:13px;line-height:13px;color:#3c3c3c;transform:scaleX(0.9355);transform-origin:0 0;">medianBuffer</div>
<svg style="left:20.2px;top:708.5px" width="15" height="15" viewBox="0 0 15 15"><rect x="0.5" y="0.5" width="10.5" height="10.5" rx="1" fill="#a6d4f4" stroke="#2f6aa8" stroke-width="1"/><path d="M2.8 2.5 l2.7 6 l2.7-6" fill="none" stroke="#fff" stroke-width="1.3"/><circle cx="10.5" cy="10.5" r="3" fill="#fff" stroke="#555" stroke-width="1.4" stroke-dasharray="1.2 0.7"/><circle cx="10.5" cy="10.5" r="1" fill="#fff" stroke="#555" stroke-width="0.8"/></svg>
<div class="t" style="left:40.69px;top:708.80px;font-size:13px;line-height:13px;color:#3c3c3c;transform:scaleX(0.9056);transform-origin:0 0;">medianFilter</div>
<div class="a" style="left:343px;top:101px;width:788px;height:22px;background:#f3f3f3;border-top:1.3px solid #d0d0d0"></div>
<div class="a" style="left:373px;top:102px;width:1px;height:20px;background:#d2d2d2"></div>
<div class="t" style="left:347.11px;top:104.88px;font-size:11.6px;line-height:11.6px;color:#3c3c3c;transform:scaleX(0.8947);transform-origin:0 0;">...er</div>
<div class="a" style="left:495px;top:102px;width:1px;height:20px;background:#d2d2d2"></div>
<svg style="left:377px;top:105.5px" width="14" height="14" viewBox="0 0 14 14"><path d="M3.5 0.5 h7 l3 5.2 l-3 5.3 h-7 l-3-5.3z" fill="#ea4a3c"/><path d="M4 3 h6 M1.5 5.5 h11 M3 8 h8" stroke="#fff" stroke-width="0.9" opacity="0.85"/></svg>
<div class="t" style="left:394.05px;top:104.88px;font-size:11.6px;line-height:11.6px;color:#3c3c3c;transform:scaleX(0.9540);transform-origin:0 0;">MPLAB Discover</div>
<svg style="left:485.5px;top:107px" width="7" height="7" viewBox="0 0 7 7"><path d="M0.6 0.6 L6.4 6.4 M6.4 0.6 L0.6 6.4" stroke="#222" stroke-width="1.35"/></svg>
<div class="a" style="left:607px;top:102px;width:1px;height:20px;background:#d2d2d2"></div>
<svg style="left:499.2px;top:104px" width="14" height="14" viewBox="0 0 14 14"><path d="M2.5 0.5 h7 l3.5 3.5 v9.5 h-10.5z" fill="#e8eef4" stroke="#6a7a8a" stroke-width="1"/><path d="M9.5 0.5 v3.5 h3.5" fill="#fff" stroke="#6a7a8a" stroke-width="0.8"/><path d="M5 8.5 h6 M5 10.5 h6" stroke="#9aaaba" stroke-width="0.8"/><rect x="0" y="2" width="7" height="6" fill="#707070"/><text x="1.6" y="7.3" font-family="Liberation Sans" font-weight="bold" font-size="6.2" fill="#fff">h</text></svg>
<div class="t" style="left:515.99px;top:104.88px;font-size:11.6px;line-height:11.6px;color:#3c3c3c;transform:scaleX(1.0141);transform-origin:0 0;">MedianFilter.h</div>
<svg style="left:596px;top:107px" width="7" height="7" viewBox="0 0 7 7"><path d="M0.6 0.6 L6.4 6.4 M6.4 0.6 L0.6 6.4" stroke="#222" stroke-width="1.35"/></svg>
<div class="a" style="left:674px;top:102px;width:1px;height:20px;background:#d2d2d2"></div>
<svg style="left:610.2px;top:104px" width="14" height="14" viewBox="0 0 14 14"><path d="M2.5 0.5 h7 l3.5 3.5 v9.5 h-10.5z" fill="#e8eef4" stroke="#6a7a8a" stroke-width="1"/><path d="M9.5 0.5 v3.5 h3.5" fill="#fff" stroke="#6a7a8a" stroke-width="0.8"/><path d="M5 8.5 h6 M5 10.5 h6" stroke="#9aaaba" stroke-width="0.8"/><rect x="0" y="2" width="7" height="6" fill="#707070"/><text x="1.6" y="7.3" font-family="Liberation Sans" font-weight="bold" font-size="6.2" fill="#fff">h</text></svg>
<div class="t" style="left:627.00px;top:104.88px;font-size:11.6px;line-height:11.6px;color:#3c3c3c;transform:scaleX(0.9677);transform-origin:0 0;">sine.h</div>
<svg style="left:664.5px;top:107px" width="7" height="7" viewBox="0 0 7 7"><path d="M0.6 0.6 L6.4 6.4 M6.4 0.6 L0.6 6.4" stroke="#222" stroke-width="1.35"/></svg>
<div class="a" style="left:784px;top:102px;width:1px;height:20px;background:#d2d2d2"></div>
<svg style="left:678.2px;top:104px" width="14" height="14" viewBox="0 0 14 14"><path d="M2.5 0.5 h7 l3.5 3.5 v9.5 h-10.5z" fill="#e8eef4" stroke="#6a7a8a" stroke-width="1"/><path d="M9.5 0.5 v3.5 h3.5" fill="#fff" stroke="#6a7a8a" stroke-width="0.8"/><path d="M5 8.5 h6 M5 10.5 h6" stroke="#9aaaba" stroke-width="0.8"/><rect x="0" y="2" width="7" height="6" fill="#e07c10"/><text x="1.6" y="7.3" font-family="Liberation Sans" font-weight="bold" font-size="6.2" fill="#fff">c</text></svg>
<div class="t" style="left:694.99px;top:104.88px;font-size:11.6px;line-height:11.6px;color:#3c3c3c;transform:scaleX(1.0141);transform-origin:0 0;">MedianFilter.c</div>
<svg style="left:774px;top:107px" width="7" height="7" viewBox="0 0 7 7"><path d="M0.6 0.6 L6.4 6.4 M6.4 0.6 L0.6 6.4" stroke="#222" stroke-width="1.35"/></svg>
<div class="a" style="left:930px;top:102px;width:1px;height:20px;background:#d2d2d2"></div>
<svg style="left:862.2px;top:104px" width="14" height="14" viewBox="0 0 14 14"><path d="M2.5 0.5 h7 l3.5 3.5 v9.5 h-10.5z" fill="#e8eef4" stroke="#6a7a8a" stroke-width="1"/><path d="M9.5 0.5 v3.5 h3.5" fill="#fff" stroke="#6a7a8a" stroke-width="0.8"/><path d="M5 8.5 h6 M5 10.5 h6" stroke="#9aaaba" stroke-width="0.8"/><rect x="0" y="2" width="7" height="6" fill="#e07c10"/><text x="1.6" y="7.3" font-family="Liberation Sans" font-weight="bold" font-size="6.2" fill="#fff">c</text></svg>
<div class="t" style="left:879.00px;top:104.88px;font-size:11.6px;line-height:11.6px;color:#3c3c3c;transform:scaleX(0.9714);transform-origin:0 0;">clock.c</div>
<svg style="left:919.5px;top:107px" width="7" height="7" viewBox="0 0 7 7"><path d="M0.6 0.6 L6.4 6.4 M6.4 0.6 L0.6 6.4" stroke="#222" stroke-width="1.35"/></svg>
<div class="a" style="left:1051px;top:102px;width:1px;height:20px;background:#d2d2d2"></div>
<svg style="left:933.2px;top:104px" width="14" height="14" viewBox="0 0 14 14"><path d="M2.5 0.5 h7 l3.5 3.5 v9.5 h-10.5z" fill="#e8eef4" stroke="#6a7a8a" stroke-width="1"/><path d="M9.5 0.5 v3.5 h3.5" fill="#fff" stroke="#6a7a8a" stroke-width="0.8"/><path d="M5 8.5 h6 M5 10.5 h6" stroke="#9aaaba" stroke-width="0.8"/><rect x="0" y="2" width="7" height="6" fill="#e07c10"/><text x="1.6" y="7.3" font-family="Liberation Sans" font-weight="bold" font-size="6.2" fill="#fff">c</text></svg>
<div class="t" style="left:950.00px;top:104.88px;font-size:11.6px;line-height:11.6px;color:#3c3c3c;transform:scaleX(1.0120);transform-origin:0 0;">data_streamer.c</div>
<svg style="left:1039.8px;top:107px" width="7" height="7" viewBox="0 0 7 7"><path d="M0.6 0.6 L6.4 6.4 M6.4 0.6 L0.6 6.4" stroke="#222" stroke-width="1.35"/></svg>
<div class="a" style="left:1131px;top:102px;width:1px;height:20px;background:#d2d2d2"></div>
<svg style="left:1054.2px;top:104px" width="14" height="14" viewBox="0 0 14 14"><path d="M2.5 0.5 h7 l3.5 3.5 v9.5 h-10.5z" fill="#e8eef4" stroke="#6a7a8a" stroke-width="1"/><path d="M9.5 0.5 v3.5 h3.5" fill="#fff" stroke="#6a7a8a" stroke-width="0.8"/><path d="M5 8.5 h6 M5 10.5 h6" stroke="#9aaaba" stroke-width="0.8"/><rect x="0" y="2" width="7" height="6" fill="#e07c10"/><text x="1.6" y="7.3" font-family="Liberation Sans" font-weight="bold" font-size="6.2" fill="#fff">c</text></svg>
<div class="t" style="left:1071.00px;top:104.88px;font-size:11.6px;line-height:11.6px;color:#3c3c3c;transform:scaleX(0.9565);transform-origin:0 0;">system.c</div>
<svg style="left:1121.4px;top:107px" width="7" height="7" viewBox="0 0 7 7"><path d="M0.6 0.6 L6.4 6.4 M6.4 0.6 L0.6 6.4" stroke="#222" stroke-width="1.35"/></svg>
<div class="a" style="left:343px;top:122px;width:934px;height:784px;background:#f5f5f5;border:1.5px solid #2b2b2b"></div>
<div class="a" style="left:784px;top:99px;width:75px;height:25px;background:#fff;border:1px solid #cfcfcf;border-bottom:none;border-radius:3px 3px 0 0"></div>
<svg style="left:788.2px;top:104px" width="14" height="14" viewBox="0 0 14 14"><path d="M2.5 0.5 h7 l3.5 3.5 v9.5 h-10.5z" fill="#e8eef4" stroke="#6a7a8a" stroke-width="1"/><path d="M9.5 0.5 v3.5 h3.5" fill="#fff" stroke="#6a7a8a" stroke-width="0.8"/><path d="M5 8.5 h6 M5 10.5 h6" stroke="#9aaaba" stroke-width="0.8"/><rect x="0" y="2" width="7" height="6" fill="#e07c10"/><text x="1.6" y="7.3" font-family="Liberation Sans" font-weight="bold" font-size="6.2" fill="#fff">c</text></svg>
<div class="t" style="left:806.00px;top:104.88px;font-size:11.6px;line-height:11.6px;color:#3c3c3c;transform:scaleX(0.9412);transform-origin:0 0;">main.c</div>
<svg style="left:848.7px;top:107px" width="7" height="7" viewBox="0 0 7 7"><path d="M0.6 0.6 L6.4 6.4 M6.4 0.6 L0.6 6.4" stroke="#222" stroke-width="1.35"/></svg>
<div class="a" style="left:785px;top:121px;width:73px;height:3px;background:#fff"></div>
<div class="a" style="left:1147px;top:103px;width:28px;height:20px;background:#fbfbfb;border:1px solid #d0d0d0;border-bottom:none;border-radius:3px 3px 0 0"></div>
<div class="a" style="left:1177px;top:103px;width:28px;height:20px;background:#bdbdbd;border:1px solid #d0d0d0;border-bottom:none;border-radius:3px 3px 0 0"></div>
<div class="a" style="left:1211px;top:103px;width:28px;height:20px;background:#fbfbfb;border:1px solid #d0d0d0;border-bottom:none;border-radius:3px 3px 0 0"></div>
<div class="a" style="left:1243px;top:103px;width:29px;height:20px;background:#fbfbfb;border:1px solid #d0d0d0;border-bottom:none;border-radius:3px 3px 0 0"></div>
<svg style="left:1157px;top:109px" width="6" height="8" viewBox="0 0 6 8"><path d="M5.5 0 L0 4 L5.5 8z" fill="#222"/></svg>
<svg style="left:1188px;top:109px" width="6" height="8" viewBox="0 0 6 8"><path d="M0.5 0 L6 4 L0.5 8z" fill="#222"/></svg>
<svg style="left:1221px;top:111px" width="8" height="6" viewBox="0 0 8 6"><path d="M0 0 L8 0 L4 5.5z" fill="#222"/></svg>
<svg style="left:1252px;top:109px" width="9" height="7" viewBox="0 0 9 7"><rect x="0.75" y="0.75" width="7.5" height="5.5" fill="none" stroke="#222" stroke-width="1.5"/></svg>
<div class="a" style="left:1132px;top:122px;width:145px;height:1.5px;background:#f5f5f5"></div>
<div class="a" style="left:1147px;top:121px;width:28px;height:3px;background:#fbfbfb"></div>
<div class="a" style="left:1211px;top:121px;width:28px;height:3px;background:#fbfbfb"></div>
<div class="a" style="left:1243px;top:121px;width:29px;height:3px;background:#fbfbfb"></div>
<div class="a" style="left:1131px;top:122px;width:16px;height:1.5px;background:#2b2b2b"></div>
<div class="a" style="left:1175px;top:122px;width:36px;height:1.5px;background:#2b2b2b"></div>
<div class="a" style="left:1239px;top:122px;width:4px;height:1.5px;background:#2b2b2b"></div>
<div class="a" style="left:1272px;top:122px;width:5px;height:1.5px;background:#2b2b2b"></div>
<div class="a" style="left:349px;top:130px;width:64px;height:28px;background:#d3d3d3;border:1px solid #bdbdbd;border-radius:3px"></div>
<div class="t" style="left:363.75px;top:138.59px;font-size:11px;line-height:11px;color:#333;transform:scaleX(1.0000);transform-origin:0 0;">Source</div>
<div class="t" style="left:426.89px;top:138.59px;font-size:11px;line-height:11px;color:#333;transform:scaleX(1.1121);transform-origin:0 0;">History</div>
<svg style="left:490px;top:137px" width="15" height="15" viewBox="0 0 15 15"><path d="M0.5 3 h4 l1-2 h7 l2 2 v11.5 h-14z" fill="#9a9a9a" stroke="#7a7a7a" stroke-width="0.8"/><rect x="0" y="2" width="8" height="3" fill="#808080"/></svg>
<div class="a" style="left:520px;top:135px;width:1.3px;height:18px;background:#4a4a4a"></div>
<svg style="left:536px;top:137px" width="16" height="15" viewBox="0 0 16 15"><rect x="0.5" y="1" width="12" height="12" fill="#e8eef4" stroke="#4a5e72" stroke-width="1"/><path d="M2.5 3 v8" stroke="#333" stroke-width="1"/><path d="M6 7 l4-3.5 v2 h4 v3 h-4 v2z" fill="#f0a838" stroke="#b06a10" stroke-width="0.8"/></svg>
<svg style="left:572px;top:137px" width="16" height="15" viewBox="0 0 16 15"><rect x="0.5" y="1" width="12" height="12" fill="#e8eef4" stroke="#4a5e72" stroke-width="1"/><path d="M2.5 4 h7 M2.5 6 h7" stroke="#8a9aaa" stroke-width="0.8"/><path d="M5 10 l4-3.5 v2 h4.5 v3 h-4.5 v2z" fill="#f0a838" stroke="#b06a10" stroke-width="0.8"/></svg>
<svg style="left:591px;top:143px" width="6" height="4" viewBox="0 0 6 4"><path d="M0 0 L6 0 L3 3.5Z" fill="#3a4a5a"/></svg>
<svg style="left:617px;top:137px" width="16" height="15" viewBox="0 0 16 15"><rect x="0.5" y="1" width="12" height="12" fill="#d0d0d0" stroke="#a8a8a8" stroke-width="1"/><path d="M12 10 l-4-3.5 v2 h-4.5 v3 h4.5 v2z" fill="#d8c8b0" stroke="#b8a890" stroke-width="0.8"/></svg>
<svg style="left:637px;top:143px" width="6" height="4" viewBox="0 0 6 4"><path d="M0 0 L6 0 L3 3.5Z" fill="#3a4a5a"/></svg>
<div class="a" style="left:656.5px;top:135px;width:1.3px;height:18px;background:#4a4a4a"></div>
<svg style="left:674px;top:137px" width="15" height="15" viewBox="0 0 15 15"><rect x="0.5" y="0.5" width="10" height="5" fill="#f0b060" stroke="#a87030" stroke-width="1"/><circle cx="7" cy="8" r="3.5" fill="#c8dcec" stroke="#333" stroke-width="1.4"/><path d="M9.5 10.5 L13 14" stroke="#222" stroke-width="2"/></svg>
<svg style="left:709px;top:137px" width="15" height="15" viewBox="0 0 15 15"><rect x="0.5" y="0.5" width="10" height="5" fill="#f0b060" stroke="#a87030" stroke-width="1"/><path d="M1 9.5 l4.5-4 v2.5 h7.5 v3 h-7.5 v2.5z" fill="#8ac8f0" stroke="#2a70b0" stroke-width="1"/></svg>
<svg style="left:745px;top:137px" width="15" height="15" viewBox="0 0 15 15"><rect x="3.5" y="0.5" width="10" height="5" fill="#f0b060" stroke="#a87030" stroke-width="1"/><path d="M14 9.5 l-4.5-4 v2.5 h-7.5 v3 h7.5 v2.5z" fill="#8ac8f0" stroke="#2a70b0" stroke-width="1"/></svg>
<svg style="left:781px;top:137px" width="16" height="15" viewBox="0 0 16 15"><rect x="0.5" y="0.5" width="10" height="5" fill="#f0b060" stroke="#a87030" stroke-width="1"/><rect x="3.5" y="8" width="11" height="5" fill="#9a9a9a" stroke="#666" stroke-width="1"/></svg>
<svg style="left:817px;top:137px" width="15" height="15" viewBox="0 0 15 15"><rect x="0.5" y="1.5" width="10" height="9" fill="none" stroke="#555" stroke-width="1" stroke-dasharray="1.5 1"/><path d="M9 8 L14 11 L10 12 L9 15z" fill="#3a5a7a"/></svg>
<div class="a" style="left:847px;top:135px;width:1.3px;height:18px;background:#4a4a4a"></div>
<svg style="left:864px;top:137px" width="15" height="15" viewBox="0 0 15 15"><path d="M1 7 l4-5 l4 5 h-2.5 v6 h-3 v-6z" fill="#f0a838" stroke="#a86a10" stroke-width="0.8"/><path d="M7 4 h5 l2.5 2.5 l-2.5 2.5 h-5z" fill="#8ad0ee" stroke="#3a8ab8" stroke-width="0.8"/></svg>
<svg style="left:900px;top:137px" width="15" height="15" viewBox="0 0 15 15"><path d="M1 7 l4 5 l4-5 h-2.5 v-6 h-3 v6z" fill="#f0a838" stroke="#a86a10" stroke-width="0.8"/><path d="M7 9 h5 l2.5 2.5 l-2.5 2.5 h-5z" fill="#8ad0ee" stroke="#3a8ab8" stroke-width="0.8"/></svg>
<svg style="left:936px;top:137px" width="15" height="15" viewBox="0 0 15 15"><path d="M1 1 h5 l2.5 2.5 l-2.5 2.5 h-5z" fill="#8ad0ee" stroke="#3a8ab8" stroke-width="0.8"/><path d="M6 8 h5 l3 3 l-3 3 h-5z" fill="#c8c8c8" stroke="#777" stroke-width="0.8"/></svg>
<div class="a" style="left:965px;top:135px;width:1.3px;height:18px;background:#4a4a4a"></div>
<svg style="left:982px;top:137px" width="15" height="15" viewBox="0 0 15 15"><path d="M2.5 13.5 h11 M2.5 11.5 h11 M9.5 9.5 h4 M9.5 7.5 h4 M9.5 5.5 h4 M9.5 3.5 h4" stroke="#555" stroke-width="1" stroke-dasharray="1.2 0.6"/><path d="M1 5.5 l4-4 v2.5 h4 v3 h-4 v2.5z" fill="#8ad0ee" stroke="#2a70b0" stroke-width="0.9"/></svg>
<svg style="left:1018px;top:137px" width="15" height="15" viewBox="0 0 15 15"><path d="M2.5 13.5 h11 M2.5 11.5 h11 M9.5 9.5 h4 M9.5 7.5 h4 M9.5 5.5 h4 M9.5 3.5 h4" stroke="#555" stroke-width="1" stroke-dasharray="1.2 0.6"/><path d="M9 5.5 l-4-4 v2.5 h-4 v3 h4 v2.5z" fill="#8ad0ee" stroke="#2a70b0" stroke-width="0.9"/></svg>
<div class="a" style="left:1047px;top:135px;width:1.3px;height:18px;background:#4a4a4a"></div>
<svg style="left:1065px;top:139px" width="12" height="12" viewBox="0 0 12 12"><circle cx="6" cy="6" r="5.2" fill="#f07070" stroke="#c04848" stroke-width="0.8"/><circle cx="5" cy="4.5" r="2.5" fill="#f8a8a8"/></svg>
<svg style="left:1101px;top:138px" width="12" height="13" viewBox="0 0 12 13"><rect x="0.5" y="0.5" width="10.5" height="11" fill="#c4c4c4" stroke="#777" stroke-width="1"/></svg>
<div class="a" style="left:1129px;top:135px;width:1.3px;height:18px;background:#4a4a4a"></div>
<svg style="left:1146px;top:137px" width="15" height="15" viewBox="0 0 15 15"><path d="M1.5 13.5 h12 M1.5 11.5 h12 M1.5 9.5 h12 M9.5 7.5 h4 M9.5 5.5 h4" stroke="#444" stroke-width="1" stroke-dasharray="1.2 0.6"/><path d="M2 8 q2-6 4.5-6.5 M5 8 q2-6 4.5-6.5" stroke="#4cb82a" stroke-width="1.8" fill="none"/></svg>
<svg style="left:1182px;top:137px" width="15" height="15" viewBox="0 0 15 15"><path d="M1.5 13.5 h12 M1.5 11.5 h12 M1.5 9.5 h12 M9.5 7.5 h4 M9.5 5.5 h4" stroke="#222" stroke-width="1.1" stroke-dasharray="1.2 0.6"/></svg>
<svg style="left:1217px;top:136px" width="16" height="17" viewBox="0 0 16 17"><path d="M1.5 1.5 L13 13 H1.5z" fill="#dce6f0" stroke="#7a8ea2" stroke-width="1"/><rect x="8" y="1" width="6.5" height="6" fill="#6a6a6a"/><text x="9.3" y="6.3" font-family="Liberation Sans" font-weight="bold" font-size="5" fill="#fff">H</text><rect x="1" y="10" width="7" height="6" fill="#e07c10"/><text x="2.3" y="15.3" font-family="Liberation Sans" font-weight="bold" font-size="5.5" fill="#fff">C</text></svg>
<svg style="left:1257.5px;top:140px" width="10" height="10" viewBox="0 0 10 10"><rect x="0.5" y="0.5" width="3.8" height="3.8" fill="none" stroke="#222" stroke-width="1"/><rect x="5.5" y="0.5" width="3.8" height="3.8" fill="none" stroke="#222" stroke-width="1"/><rect x="0.5" y="5.5" width="3.8" height="3.8" fill="none" stroke="#222" stroke-width="1"/><rect x="5.5" y="5.5" width="3.8" height="3.8" fill="none" stroke="#222" stroke-width="1"/></svg>
<div class="a" style="left:344.5px;top:164px;width:906.5px;height:724px;background:#fff"></div>
<div class="a" style="left:1251px;top:164px;width:14px;height:724px;background:#fbfbfb"></div>
<div class="a" style="left:344.5px;top:164px;width:28px;height:724px;background:#e9e8e2"></div>
<div class="a" style="left:372px;top:164px;width:1px;height:724px;background:#dcdbd5"></div>
<div class="a" style="left:404.5px;top:671.5px;width:846.5px;height:18.4px;background:#e8eef8"></div>
<div class="a" style="left:1157px;top:164px;width:1.3px;height:696px;background:#f5b8b8"></div>
<svg style="left:383px;top:166px" width="12" height="12" viewBox="0 0 12 12"><rect x="0.5" y="0.5" width="11" height="11" fill="#fff" stroke="#8a8a8a" stroke-width="1"/><path d="M3 6 h6" stroke="#555" stroke-width="1.2"/></svg>
<div class="a" style="left:388.5px;top:178px;width:1.3px;height:69px;background:#9a9a9a"></div>
<div class="a" style="left:388.5px;top:246px;width:6px;height:1.3px;background:#9a9a9a"></div>
<svg style="left:383px;top:392px" width="12" height="12" viewBox="0 0 12 12"><rect x="0.5" y="0.5" width="11" height="11" fill="#fff" stroke="#8a8a8a" stroke-width="1"/><path d="M3 6 h6" stroke="#555" stroke-width="1.2"/></svg>
<div class="a" style="left:388.5px;top:404px;width:1.3px;height:444px;background:#9a9a9a"></div>
<div class="a" style="left:388.5px;top:848px;width:6px;height:1.3px;background:#9a9a9a"></div>
<div class="a" style="left:404.5px;top:409px;width:0;height:431px;border-left:1px dotted #c8c8c8"></div>
<div class="a" style="left:442.5px;top:635px;width:0;height:196px;border-left:1px dotted #c8c8c8"></div>
<div class="code"><span class="pp">#include</span> <span class="st">&quot;mcc_generated_files/system/system.h&quot;</span>
<span class="pp">#include</span> <span class="st">&quot;mcc_generated_files/data_streamer/data_streamer.h&quot;</span>
<span class="pp">#include</span> <span class="st">&quot;filter/MedianFilter.h&quot;</span>
<span class="pp">#include</span> <span class="st">&quot;filter/sine.h&quot;</span>
<span class="pp">#include</span> <span class="st">&lt;util/delay.h&gt;</span>

<span class="pp">#define</span> <span class="ty">NUM_ELEMENTS</span>    31

<span class="kw">static</span> <span class="ty">sMedianFilter_t</span> medianFilter;
<span class="kw">static</span> <span class="ty">sMedianNode_t</span> medianBuffer[<span class="ty">NUM_ELEMENTS</span>];

<span class="kw">int</span> <b style="background:#f0eeb8">main</b>(<span class="kw">void</span>)
{
    SYSTEM_Initialize();

    <span class="kw">volatile</span> <span class="ty">uint16_t</span> original = 0;
    <span class="kw">volatile</span> <span class="ty">uint16_t</span> filtered = 0;
    <span class="ty">uint8_t</span> i = 0;
    medianFilter.<span class="fd">numNodes</span> = <span class="ty">NUM_ELEMENTS</span>;
    medianFilter.<span class="fd">medianBuffer</span> = medianBuffer;
    MEDIANFILTER_Init(&amp;medianFilter);


    <span class="kw">while</span> (1)
    {

        original = sinewave[i++];
        _delay_ms(100);
        <span class="cm">// Using pin PD6 to measure duration of median filter</span>
        <span class="ty">IO_PD6_SetHigh</span>(); <span class="cm">// Make PD6 output logic high</span>
        filtered = MEDIANFILTER_Insert(&amp;medianFilter, original);
        <span class="ty">IO_PD6_SetLow</span>(); <span class="cm">// Make PD6 output logic low</span>

        <span class="cm">// sending data over usart</span>
        variableWrite_SendFrame(original, filtered);
    }
}</div>
<div class="lnum">33
34
35
36
37
38
39
40
41
42
43
44
45
46
47
48
49
50
51
52
53
54
55
56
57
58
59
60
61
62
63
64
65
66
67
68
69</div>
<div class="a" style="left:620.5px;top:674.6800000000001px;width:1.2px;height:16px;background:#000"></div>
<div class="a" style="left:1255px;top:454px;width:5px;height:322px;background:#9c9c9c;border-radius:3px"></div>
<div class="a" style="left:1265px;top:164px;width:10px;height:724px;background:#f5f5f5"></div>
<div class="a" style="left:1266.5px;top:171px;width:6px;height:6px;background:#5cb85c"></div>
<div class="a" style="left:1265px;top:551px;width:9px;height:2px;background:#b8a850"></div>
<div class="a" style="left:1267px;top:688px;width:6px;height:1.5px;background:#555"></div>
<svg style="left:1252px;top:167px" width="12" height="9" viewBox="0 0 12 9"><path d="M2 7 L6 3 L10 7" fill="none" stroke="#222" stroke-width="1.8"/></svg>
<svg style="left:1252px;top:876px" width="12" height="9" viewBox="0 0 12 9"><path d="M2 2 L6 6 L10 2" fill="none" stroke="#222" stroke-width="1.8"/></svg>
<div class="a" style="left:344.5px;top:887.6px;width:931px;height:1.3px;background:#2b2b2b"></div>
<div class="a" style="left:344.5px;top:888.5px;width:931px;height:16px;background:#f2f2f2"></div>
<svg style="left:351px;top:889px" width="14" height="14" viewBox="0 0 14 14"><path d="M2.5 0.5 h7 l3.5 3.5 v9.5 h-10.5z" fill="#e8eef4" stroke="#6a7a8a" stroke-width="1"/><path d="M9.5 0.5 v3.5 h3.5" fill="#fff" stroke="#6a7a8a" stroke-width="0.8"/><path d="M5 8.5 h6 M5 10.5 h6" stroke="#9aaaba" stroke-width="0.8"/><rect x="0" y="2" width="7" height="6" fill="#e07c10"/><text x="1.6" y="7.3" font-family="Liberation Sans" font-weight="bold" font-size="6.2" fill="#fff">c</text></svg>
<svg style="left:375px;top:890.5px" width="8" height="14" viewBox="0 0 8 14"><path d="M1.2 0.8 L6.5 6.5 L1.2 12.2" fill="none" stroke="#8a96a2" stroke-width="2.2"/></svg>
<svg style="left:394px;top:890px" width="14" height="14" viewBox="0 0 14 14"><circle cx="6.5" cy="6.5" r="5.7" fill="#e46464" stroke="#b83838" stroke-width="0.9"/><circle cx="5.5" cy="5" r="3" fill="#f6a8a8"/><text x="4" y="9.5" font-family="Liberation Sans" font-weight="bold" font-size="7" fill="#fff">F</text></svg>
<div class="t" style="left:410.00px;top:890.34px;font-size:12px;line-height:12px;color:#3c3c3c;transform:scaleX(1.0000);transform-origin:0 0;">main</div>
<svg style="left:440px;top:890.5px" width="8" height="14" viewBox="0 0 8 14"><path d="M1.2 0.8 L6.5 6.5 L1.2 12.2" fill="none" stroke="#8a96a2" stroke-width="2.2"/></svg>
<div class="t" style="left:458.90px;top:890.34px;font-size:12px;line-height:12px;color:#3c3c3c;transform:scaleX(0.9400);transform-origin:0 0;">while (1)</div>
<svg style="left:506px;top:890.5px" width="8" height="14" viewBox="0 0 8 14"><path d="M1.2 0.8 L6.5 6.5 L1.2 12.2" fill="none" stroke="#8a96a2" stroke-width="2.2"/></svg>
<svg style="left:1262px;top:892px" width="9" height="9" viewBox="0 0 9 9"><path d="M1 1 L8 8 M8 1 L1 8" stroke="#222" stroke-width="1.5"/></svg>
<div class="a" style="left:343.5px;top:911.5px;width:934px;height:20.5px;background:#f5f5f5;border:1px solid #d8d8d8;border-bottom:none"></div>
<div class="a" style="left:540px;top:912px;width:1px;height:20px;background:#d4d4d4"></div>
<div class="a" style="left:629px;top:912px;width:1px;height:20px;background:#d4d4d4"></div>
<div class="a" style="left:708px;top:912px;width:1px;height:20px;background:#d4d4d4"></div>
<div class="a" style="left:780px;top:912px;width:1px;height:20px;background:#d4d4d4"></div>
<div class="a" style="left:883px;top:912px;width:1px;height:20px;background:#d4d4d4"></div>
<div class="a" style="left:708px;top:911px;width:72px;height:21px;background:#e9e9e9;border:1px solid #cfcfcf;border-bottom:none;border-radius:2px 2px 0 0"></div>
<div class="t" style="left:349.50px;top:915.57px;font-size:10.2px;line-height:10.2px;color:#4a4a4a;transform:scaleX(1.0273);transform-origin:0 0;">Output - Configuration Loading Error</div>
<div class="t" style="left:546.20px;top:915.57px;font-size:10.2px;line-height:10.2px;color:#4a4a4a;transform:scaleX(0.9348);transform-origin:0 0;">Search Results</div>
<div class="t" style="left:633.26px;top:915.57px;font-size:10.2px;line-height:10.2px;color:#4a4a4a;transform:scaleX(1.0364);transform-origin:0 0;">Notifications</div>
<div class="t" style="left:714.90px;top:915.57px;font-size:10.2px;line-height:10.2px;color:#4a4a4a;transform:scaleX(0.9771);transform-origin:0 0;">Call Graph</div>
<svg style="left:768.6px;top:917.2px" width="7" height="7" viewBox="0 0 7 7"><path d="M0.6 0.6 L6.4 6.4 M6.4 0.6 L0.6 6.4" stroke="#222" stroke-width="1.35"/></svg>
<div class="t" style="left:785.17px;top:915.57px;font-size:10.2px;line-height:10.2px;color:#4a4a4a;transform:scaleX(1.0282);transform-origin:0 0;">Program Memory</div>
<svg style="left:1259px;top:915px" width="11" height="10" viewBox="0 0 11 10"><rect x="0.75" y="0.75" width="9.5" height="8.5" fill="#fff" stroke="#555" stroke-width="1.3"/><rect x="3" y="5.5" width="5" height="2" fill="#333"/></svg>
<div class="a" style="left:343.5px;top:931px;width:934px;height:243px;background:#f5f5f5;border:1.5px solid #333;border-top:none"></div>
<div class="a" style="left:345px;top:931.5px;width:930px;height:1px;background:#d8d8d8"></div>
<div class="a" style="left:1094.5px;top:933px;width:50px;height:22px;background:#fafafa;border:1px solid #d0d0d0;border-bottom:none;border-radius:2px 2px 0 0"></div>
<div class="t" style="left:348.62px;top:939.66px;font-size:12.1px;line-height:12.1px;color:#333;transform:scaleX(0.8848);transform-origin:0 0;">SYSTEM_Initialize</div>
<svg style="left:446px;top:942.2px" width="7" height="7" viewBox="0 0 7 7"><path d="M0.6 0.6 L6.4 6.4 M6.4 0.6 L0.6 6.4" stroke="#222" stroke-width="1.35"/></svg>
<div class="a" style="left:458.5px;top:934px;width:1px;height:20px;background:#d0d0d0"></div>
<div class="t" style="left:462.81px;top:939.66px;font-size:12.1px;line-height:12.1px;color:#333;transform:scaleX(0.8864);transform-origin:0 0;">MEDIANFILTER_Init</div>
<svg style="left:570.6px;top:942.2px" width="7" height="7" viewBox="0 0 7 7"><path d="M0.6 0.6 L6.4 6.4 M6.4 0.6 L0.6 6.4" stroke="#222" stroke-width="1.35"/></svg>
<div class="a" style="left:582px;top:934px;width:1px;height:20px;background:#d0d0d0"></div>
<div class="t" style="left:586.30px;top:939.66px;font-size:12.1px;line-height:12.1px;color:#333;transform:scaleX(0.9407);transform-origin:0 0;">variableWrite_SendFrame</div>
<svg style="left:727.3px;top:942.2px" width="7" height="7" viewBox="0 0 7 7"><path d="M0.6 0.6 L6.4 6.4 M6.4 0.6 L0.6 6.4" stroke="#222" stroke-width="1.35"/></svg>
<div class="a" style="left:739.5px;top:934px;width:1px;height:20px;background:#d0d0d0"></div>
<div class="t" style="left:744.11px;top:939.66px;font-size:12.1px;line-height:12.1px;color:#333;transform:scaleX(0.8889);transform-origin:0 0;">SYSTEM_Initialize</div>
<svg style="left:842.4px;top:942.2px" width="7" height="7" viewBox="0 0 7 7"><path d="M0.6 0.6 L6.4 6.4 M6.4 0.6 L0.6 6.4" stroke="#222" stroke-width="1.35"/></svg>
<div class="a" style="left:854.5px;top:934px;width:1px;height:20px;background:#d0d0d0"></div>
<div class="t" style="left:857.10px;top:939.66px;font-size:12.1px;line-height:12.1px;color:#333;transform:scaleX(1.0040);transform-origin:0 0;">main</div>
<svg style="left:892.6px;top:942.2px" width="7" height="7" viewBox="0 0 7 7"><path d="M0.6 0.6 L6.4 6.4 M6.4 0.6 L0.6 6.4" stroke="#222" stroke-width="1.35"/></svg>
<div class="a" style="left:905px;top:934px;width:1px;height:20px;background:#d0d0d0"></div>
<div class="t" style="left:908.50px;top:939.66px;font-size:12.1px;line-height:12.1px;color:#333;transform:scaleX(1.0040);transform-origin:0 0;">main</div>
<svg style="left:943.6px;top:942.2px" width="7" height="7" viewBox="0 0 7 7"><path d="M0.6 0.6 L6.4 6.4 M6.4 0.6 L0.6 6.4" stroke="#222" stroke-width="1.35"/></svg>
<div class="a" style="left:956.5px;top:934px;width:1px;height:20px;background:#d0d0d0"></div>
<div class="t" style="left:959.60px;top:939.66px;font-size:12.1px;line-height:12.1px;color:#333;transform:scaleX(0.8976);transform-origin:0 0;">MEDIANFILTER_Insert</div>
<svg style="left:1080.5px;top:942.2px" width="7" height="7" viewBox="0 0 7 7"><path d="M0.6 0.6 L6.4 6.4 M6.4 0.6 L0.6 6.4" stroke="#222" stroke-width="1.35"/></svg>
<div class="a" style="left:1094.5px;top:934px;width:1px;height:20px;background:#d0d0d0"></div>
<div class="t" style="left:1097.02px;top:939.66px;font-size:12.1px;line-height:12.1px;color:#333;transform:scaleX(0.9800);transform-origin:0 0;">main</div>
<svg style="left:1131.8px;top:942.2px" width="7" height="7" viewBox="0 0 7 7"><path d="M0.6 0.6 L6.4 6.4 M6.4 0.6 L0.6 6.4" stroke="#222" stroke-width="1.35"/></svg>
<div class="a" style="left:1144.5px;top:934px;width:1px;height:20px;background:#d0d0d0"></div>
<div class="a" style="left:345px;top:954px;width:930px;height:1px;background:#d8d8d8"></div>
<div class="a" style="left:378px;top:955px;width:110px;height:216.5px;background:#fff"></div>
<div class="a" style="left:487.5px;top:955px;width:1.5px;height:216.5px;background:#c8c8c8"></div>
<div class="a" style="left:489px;top:955px;width:786px;height:216.5px;background:#fff"></div>
<div class="a" style="left:378px;top:1166px;width:110px;height:5.5px;background:#f5f5f5"></div>
<div class="a" style="left:378px;top:1150px;width:109px;height:14px;background:#fafafa"></div>
<div class="a" style="left:378.5px;top:1164.5px;width:107px;height:1.3px;background:#cfcfcf"></div>
<svg style="left:383px;top:1152px" width="8" height="10" viewBox="0 0 8 10"><path d="M6 1 L2 5 L6 9" fill="none" stroke="#222" stroke-width="1.6"/></svg>
<div class="a" style="left:395px;top:1153.5px;width:40px;height:5.5px;background:#9c9c9c;border-radius:3px"></div>
<svg style="left:475px;top:1152px" width="8" height="10" viewBox="0 0 8 10"><path d="M2 1 L6 5 L2 9" fill="none" stroke="#222" stroke-width="1.6"/></svg>
<svg style="left:356px;top:964px" width="13" height="13" viewBox="0 0 13 13"><path d="M2 6 A4.5 4.5 0 0 1 10 3.5 M11 7 A4.5 4.5 0 0 1 3 9.5" fill="none" stroke="#5aaa3a" stroke-width="2.2"/><path d="M9 1 l3 3 l-3.5 1z M4 12 l-3-3 l3.5-1z" fill="#5aaa3a"/></svg>
<svg style="left:354px;top:988px" width="16" height="14" viewBox="0 0 16 14"><ellipse cx="9" cy="6" rx="6.5" ry="4.5" fill="#cfe8b0" stroke="#5a7a3a" stroke-width="1"/><circle cx="8.5" cy="5" r="2.6" fill="#111"/><path d="M1 12 q0-6 4-7 l2 3 l-2 5z" fill="#e09a3a" stroke="#9a6a20" stroke-width="0.8"/></svg>
<div class="a" style="left:354px;top:1007.5px;width:16px;height:1.5px;background:#333"></div>
<div class="a" style="left:350px;top:1010.5px;width:24px;height:24px;background:#d6d6d6;border:1px solid #bcbcbc;border-radius:3px"></div>
<svg style="left:355px;top:1015px" width="15" height="15" viewBox="0 0 15 15"><rect x="0.5" y="0.5" width="5" height="13" fill="#e6ecf2" stroke="#5a7088" stroke-width="1"/><rect x="2" y="3" width="2" height="2" fill="#d04040"/><rect x="2" y="7" width="2" height="2" fill="#d04040"/><path d="M7 4 h4 M7 10 h4" stroke="#5a7088" stroke-width="1.2"/><rect x="10.5" y="2.5" width="3.5" height="3" fill="none" stroke="#5a7088"/><rect x="10.5" y="8.5" width="3.5" height="3" fill="none" stroke="#5a7088"/></svg>
<svg style="left:355px;top:1039px" width="15" height="15" viewBox="0 0 15 15"><rect x="8.5" y="0.5" width="5" height="13" fill="#e6ecf2" stroke="#5a7088" stroke-width="1"/><rect x="10" y="3" width="2" height="2" fill="#d04040"/><rect x="10" y="7" width="2" height="2" fill="#d04040"/><path d="M4 4 h4 M4 10 h4" stroke="#5a7088" stroke-width="1.2"/><rect x="0.5" y="2.5" width="3.5" height="3" fill="none" stroke="#5a7088"/><rect x="0.5" y="8.5" width="3.5" height="3" fill="none" stroke="#5a7088"/></svg>
<svg style="left:355px;top:1063px" width="15" height="15" viewBox="0 0 15 15"><circle cx="3" cy="2.5" r="2" fill="#3a9a4a"/><path d="M3 5 v7 M1 10 l2 3 l2-3" fill="none" stroke="#3a4a5a" stroke-width="1.2"/><path d="M6 3 h2 v8 h2 M8 7 h2" fill="none" stroke="#3a4a5a" stroke-width="1"/><circle cx="11" cy="7" r="1.5" fill="#e0b030"/><circle cx="11" cy="11" r="1.5" fill="#e0b030"/></svg>
<div class="a" style="left:378.5px;top:955px;width:107px;height:15px;background:#1f9ce0"></div>
<svg style="left:380px;top:960px" width="10" height="6" viewBox="0 0 10 6"><path d="M0.5 0.5 L9.5 0.5 L5 5.5z" fill="#d8ecf8"/></svg>
<svg style="left:396px;top:955px" width="17" height="16" viewBox="0 0 17 16"><circle cx="6.8" cy="7" r="5.6" fill="#e26868" stroke="#c04a4a" stroke-width="0.8"/><circle cx="6.3" cy="6.3" r="3.6" fill="#f2a0a0"/><text x="4.6" y="9.6" font-family="Liberation Sans" font-weight="bold" font-size="6.5" fill="#fff">F</text><rect x="11" y="10.5" width="5" height="5" fill="#fff" stroke="#6a7a8a" stroke-width="0.9"/><path d="M12 11.5 l3 3 M15 12.5 v2 h-2" stroke="#6a7a8a" stroke-width="0.8" fill="none"/></svg>
<div class="t" style="left:414.70px;top:955.90px;font-size:13px;line-height:13px;color:#fff;transform:scaleX(0.9037);transform-origin:0 0;">main</div>
<div class="a" style="left:378px;top:970px;width:107.5px;height:85px;overflow:hidden">
<svg style="left:15.5px;top:4.2999999999999545px" width="6" height="10"><path d="M0.5 0.5 L5.5 5 L0.5 9.5z" fill="#8a8a8a"/></svg>
<svg style="left:29px;top:1.2999999999999545px" width="17" height="16"><circle cx="6.8" cy="7" r="5.6" fill="#e26868" stroke="#c04a4a" stroke-width="0.8"/><circle cx="6.3" cy="6.3" r="3.6" fill="#f2a0a0"/><text x="4.6" y="9.6" font-family="Liberation Sans" font-weight="bold" font-size="6.5" fill="#fff">F</text><rect x="11" y="10.5" width="5" height="5" fill="#fff" stroke="#6a7a8a" stroke-width="0.9"/><path d="M12 11.5 l3 3 M15 12.5 v2 h-2" stroke="#6a7a8a" stroke-width="0.8" fill="none"/></svg>
<div class="t" style="left:49.20px;top:2.09px;font-size:12px;line-height:12px;color:#3c3c3c;transform:scaleX(0.9207);transform-origin:0 0">SYSTEM_Initialize</div>
<svg style="left:15.5px;top:19.59999999999991px" width="6" height="10"><path d="M0.5 0.5 L5.5 5 L0.5 9.5z" fill="#8a8a8a"/></svg>
<svg style="left:29px;top:16.59999999999991px" width="17" height="16"><circle cx="6.8" cy="7" r="5.6" fill="#e26868" stroke="#c04a4a" stroke-width="0.8"/><circle cx="6.3" cy="6.3" r="3.6" fill="#f2a0a0"/><text x="4.6" y="9.6" font-family="Liberation Sans" font-weight="bold" font-size="6.5" fill="#fff">F</text><rect x="11" y="10.5" width="5" height="5" fill="#fff" stroke="#6a7a8a" stroke-width="0.9"/><path d="M12 11.5 l3 3 M15 12.5 v2 h-2" stroke="#6a7a8a" stroke-width="0.8" fill="none"/></svg>
<div class="t" style="left:49.20px;top:17.39px;font-size:12px;line-height:12px;color:#3c3c3c;transform:scaleX(0.9207);transform-origin:0 0">MEDIANFILTER_Insert</div>
<svg style="left:15.5px;top:34.89999999999998px" width="6" height="10"><path d="M0.5 0.5 L5.5 5 L0.5 9.5z" fill="#8a8a8a"/></svg>
<svg style="left:29px;top:31.899999999999977px" width="17" height="16"><circle cx="6.8" cy="7" r="5.6" fill="#e26868" stroke="#c04a4a" stroke-width="0.8"/><circle cx="6.3" cy="6.3" r="3.6" fill="#f2a0a0"/><text x="4.6" y="9.6" font-family="Liberation Sans" font-weight="bold" font-size="6.5" fill="#fff">F</text><rect x="11" y="10.5" width="5" height="5" fill="#fff" stroke="#6a7a8a" stroke-width="0.9"/><path d="M12 11.5 l3 3 M15 12.5 v2 h-2" stroke="#6a7a8a" stroke-width="0.8" fill="none"/></svg>
<div class="t" style="left:49.20px;top:32.69px;font-size:12px;line-height:12px;color:#3c3c3c;transform:scaleX(0.9207);transform-origin:0 0;">_delay_ms</div>
<svg style="left:15.5px;top:50.200000000000045px" width="6" height="10"><path d="M0.5 0.5 L5.5 5 L0.5 9.5z" fill="#8a8a8a"/></svg>
<svg style="left:29px;top:47.200000000000045px" width="17" height="16"><circle cx="6.8" cy="7" r="5.6" fill="#e26868" stroke="#c04a4a" stroke-width="0.8"/><circle cx="6.3" cy="6.3" r="3.6" fill="#f2a0a0"/><text x="4.6" y="9.6" font-family="Liberation Sans" font-weight="bold" font-size="6.5" fill="#fff">F</text><rect x="11" y="10.5" width="5" height="5" fill="#fff" stroke="#6a7a8a" stroke-width="0.9"/><path d="M12 11.5 l3 3 M15 12.5 v2 h-2" stroke="#6a7a8a" stroke-width="0.8" fill="none"/></svg>
<div class="t" style="left:49.20px;top:47.99px;font-size:12px;line-height:12px;color:#3c3c3c;transform:scaleX(0.9207);transform-origin:0 0">MEDIANFILTER_Init</div>
<svg style="left:15.5px;top:65.5px" width="6" height="10"><path d="M0.5 0.5 L5.5 5 L0.5 9.5z" fill="#8a8a8a"/></svg>
<svg style="left:29px;top:62.5px" width="17" height="16"><circle cx="6.8" cy="7" r="5.6" fill="#e26868" stroke="#c04a4a" stroke-width="0.8"/><circle cx="6.3" cy="6.3" r="3.6" fill="#f2a0a0"/><text x="4.6" y="9.6" font-family="Liberation Sans" font-weight="bold" font-size="6.5" fill="#fff">F</text><rect x="11" y="10.5" width="5" height="5" fill="#fff" stroke="#6a7a8a" stroke-width="0.9"/><path d="M12 11.5 l3 3 M15 12.5 v2 h-2" stroke="#6a7a8a" stroke-width="0.8" fill="none"/></svg>
<div class="t" style="left:49.20px;top:63.29px;font-size:12px;line-height:12px;color:#3c3c3c;transform:scaleX(0.9207);transform-origin:0 0">variableWrite_SendFrame</div>
</div>
<div class="a" style="left:518px;top:968.5px;width:119.5px;height:21.0px;background:#fff;border:1.3px solid #222"></div>
<div class="t" style="left:521.40px;top:973.89px;font-size:11px;line-height:11px;color:#111;font-weight:bold;transform:scaleX(0.9615);transform-origin:0 0;">MEDIANFILTER_Insert</div>
<div class="a" style="left:518px;top:1045px;width:59px;height:20.5px;background:#fff;border:1.3px solid #222"></div>
<div class="t" style="left:521.40px;top:1049.89px;font-size:11px;line-height:11px;color:#111;font-weight:bold;transform:scaleX(0.9286);transform-origin:0 0;">_delay_ms</div>
<div class="a" style="left:713px;top:1045px;width:32.5px;height:20.5px;background:#fff;border:1.3px solid #222"></div>
<div class="t" style="left:716.10px;top:1049.89px;font-size:11px;line-height:11px;color:#111;font-weight:bold;transform:scaleX(1.0320);transform-origin:0 0;">main</div>
<div class="a" style="left:518px;top:1121px;width:139px;height:21.5px;background:#fff;border:1.3px solid #222"></div>
<div class="t" style="left:521.40px;top:1126.29px;font-size:11px;line-height:11px;color:#111;font-weight:bold;transform:scaleX(0.9785);transform-origin:0 0;">variableWrite_SendFrame</div>
<div class="a" style="left:712px;top:1121.5px;width:97px;height:21.0px;background:#fff;border:1.3px solid #222"></div>
<div class="t" style="left:716.10px;top:1126.29px;font-size:11px;line-height:11px;color:#111;font-weight:bold;transform:scaleX(0.9421);transform-origin:0 0;">SYSTEM_Initialize</div>
<div class="a" style="left:864px;top:1121.5px;width:107.5px;height:21.0px;background:#fff;border:1.3px solid #222"></div>
<div class="t" style="left:867.50px;top:1126.29px;font-size:11px;line-height:11px;color:#111;font-weight:bold;transform:scaleX(0.9692);transform-origin:0 0;">MEDIANFILTER_Init</div>
<svg style="left:0;top:0" width="1280" height="1199"><path d="M713 1046 L609.9 994.9" stroke="#111" stroke-width="1.1"/><path d="M600 990 L611.9 990.9 L607.9 998.9z" fill="#111"/><path d="M713 1055.5 L588.5 1055.5" stroke="#111" stroke-width="1.1"/><path d="M577.5 1055.5 L588.5 1051.0 L588.5 1060.0z" fill="#111"/><path d="M713 1064.5 L616.7 1115.8" stroke="#111" stroke-width="1.1"/><path d="M607 1121 L614.6 1111.9 L618.8 1119.8z" fill="#111"/><path d="M732 1065.5 L750.8 1110.8" stroke="#111" stroke-width="1.1"/><path d="M755 1121 L746.6 1112.6 L754.9 1109.1z" fill="#111"/><path d="M745.5 1062 L880.8 1116.9" stroke="#111" stroke-width="1.1"/><path d="M891 1121 L879.1 1121.0 L882.5 1112.7z" fill="#111"/></svg>
<svg style="left:1113px;top:1180px" width="16" height="15" viewBox="0 0 16 15"><path d="M7.5 1 a6.5 5.5 0 1 1 -3 10.5 l-1 3 l-0.5-4 a6.5 5.5 0 0 1 4.5-9.5z" fill="#dde8f2" stroke="#6a7a8a" stroke-width="1"/><text x="5" y="9.5" font-family="Liberation Sans" font-weight="bold" font-size="7.5" fill="#222">2</text></svg>
<div class="a" style="left:1131px;top:1181px;width:1.1px;height:13px;background:#555"></div>
<div class="t" style="left:1177.70px;top:1182.36px;font-size:10.5px;line-height:10.5px;color:#333;transform:scaleX(1.0981);transform-origin:0 0;">60:24</div>
<div class="a" style="left:1252px;top:1181px;width:1.1px;height:13px;background:#555"></div>
<div class="t" style="left:1255.95px;top:1182.36px;font-size:10.5px;line-height:10.5px;color:#333;transform:scaleX(1.0469);transform-origin:0 0;">INS</div>
</body></html>
